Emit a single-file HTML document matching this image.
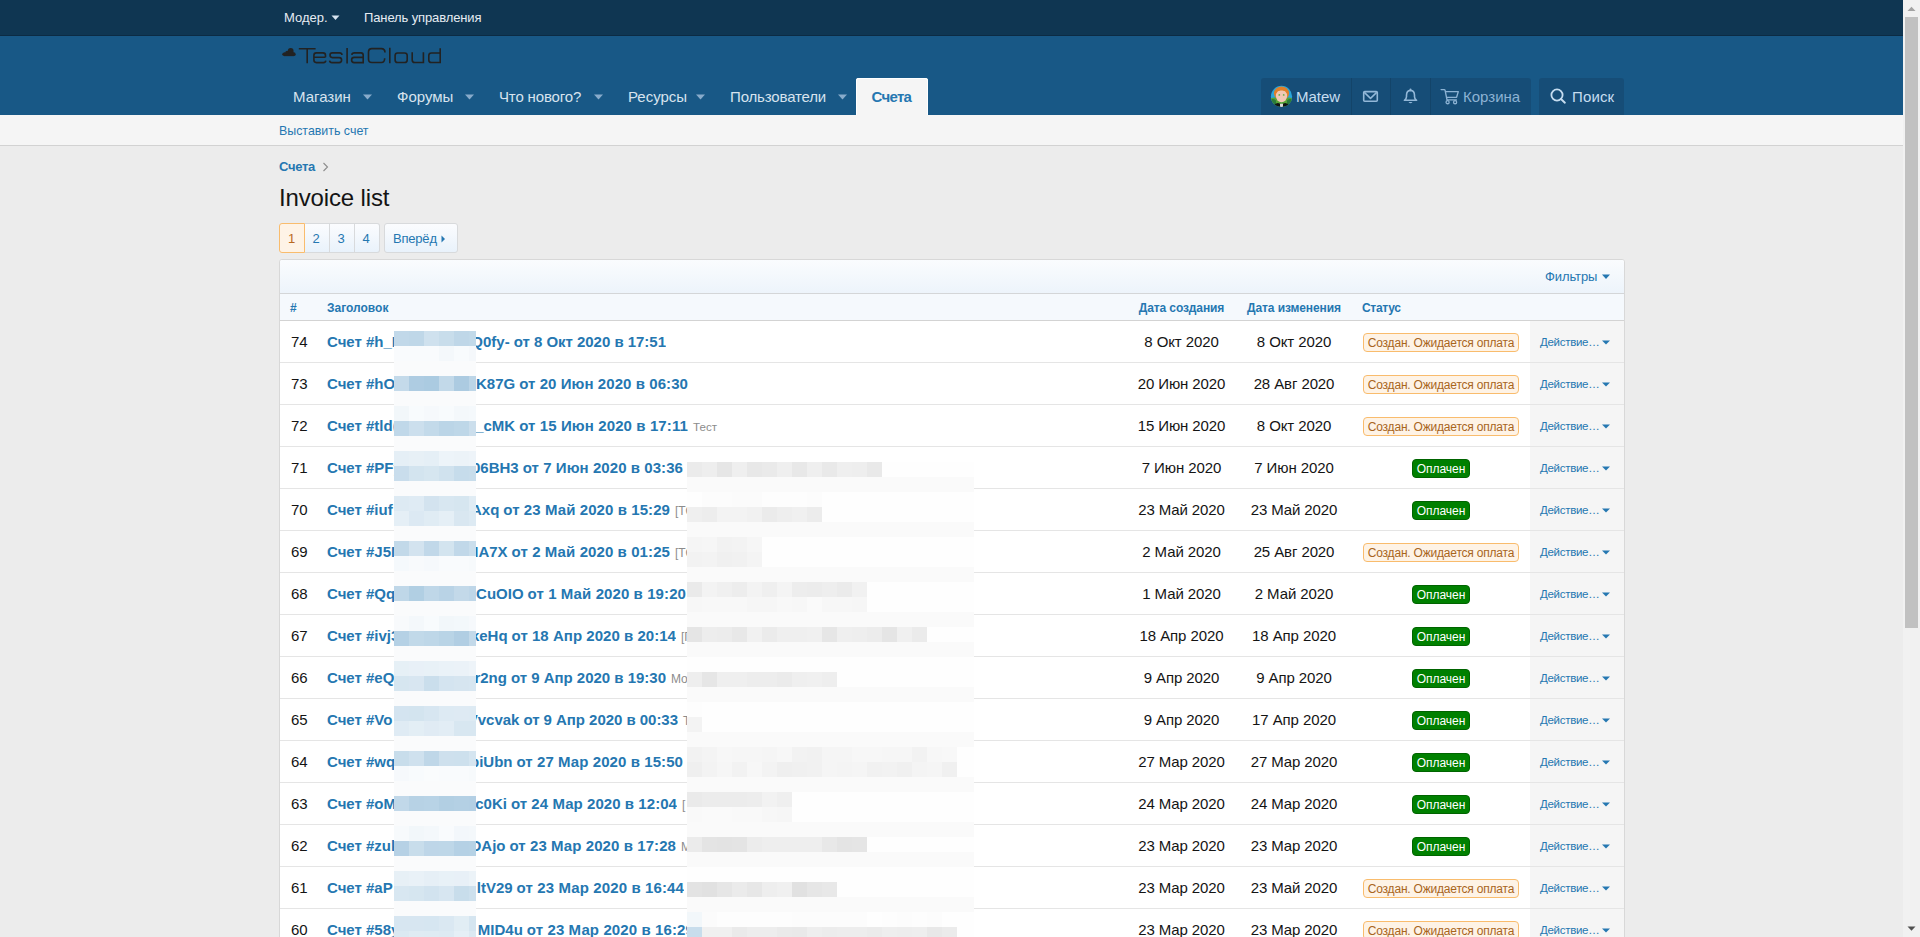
<!DOCTYPE html>
<html><head><meta charset="utf-8"><title>Invoice list</title>
<style>
html,body{margin:0;padding:0;}
body{width:1920px;height:937px;overflow:hidden;background:#ececec;position:relative;font-family:"Liberation Sans", sans-serif;}
.t{position:absolute;white-space:pre;line-height:normal;}
.r{position:absolute;}
</style></head><body>
<div class="r" style="left:0px;top:0px;width:1903px;height:36px;background:#0f3652"></div>
<div class="r" style="left:0px;top:36px;width:1903px;height:79px;background:#185886"></div>
<div class="r" style="left:0px;top:35px;width:1903px;height:1px;background:#0c2b43"></div>
<div class="r" style="left:0px;top:115px;width:1903px;height:30px;background:#f5f5f5"></div>
<div class="r" style="left:0px;top:145px;width:1903px;height:1px;background:#d2d2d2"></div>
<div class="t" style="left:284px;top:10px;font-size:13px;color:#e6ecf2;">Модер.</div>
<svg class="r" style="left:331px;top:15px" width="9" height="6"><path d="M0.5 0.5h8l-4 4.5z" fill="#d6e4f0"/></svg>
<div class="t" style="left:364px;top:10px;font-size:13px;color:#e6ecf2;letter-spacing:-0.12px;">Панель управления</div>
<svg class="r" style="left:0;top:0" width="460" height="80">
<g fill="#222"><circle cx="290.7" cy="51" r="2.9"/><circle cx="287.2" cy="52.6" r="1.9"/><circle cx="284.1" cy="54.3" r="1.8"/><circle cx="293.8" cy="54.2" r="1.85"/><rect x="284" y="52.5" width="10" height="3.65"/></g>
<g fill="none" stroke="#222" stroke-width="1.6">
<path d="M298.8 48.8H315.6M307.2 48.8V63.3"/>
<path d="M325.5 57.2V55.4Q325.5 52.9 323 52.9H316.4Q313.9 52.9 313.9 55.4V60.1Q313.9 62.6 316.4 62.6H323.4Q325.5 62.6 325.8 60.6M313.9 57.3H325.5"/>
<path d="M342 55Q341.8 52.9 339.5 52.9H332.4Q330 52.9 330 55.1Q330 57.6 332.4 57.6H339.2Q341.6 57.6 341.6 60Q341.6 62.6 339.1 62.6H332Q329.8 62.6 329.6 60.6"/>
<path d="M347.1 48V63.4"/>
<path d="M351.8 54.8Q352 52.9 354.4 52.9H361Q363.2 52.9 363.2 55.3V63.4M363.2 57.4H354.2Q351.6 57.4 351.6 60Q351.6 62.6 354.2 62.6H363.2"/>
<path d="M385 52.4Q384.9 48.6 381.3 48.6H371.8Q368.5 48.6 368.5 51.9V59.2Q368.5 62.5 371.8 62.5H381.4Q384.6 62.5 384.7 58.2"/>
<path d="M389.8 47.8V63.3"/>
<path d="M397.6 53H404.6Q407.2 53 407.2 55.6V59.9Q407.2 62.5 404.6 62.5H397.6Q395.1 62.5 395.1 59.9V55.6Q395.1 53 397.6 53Z"/>
<path d="M412.2 52.2V59.9Q412.2 62.5 414.8 62.5H423.4M423.4 52.2V63.3"/>
<path d="M440.2 48.2V63.3M440.2 62.5H431.4Q428.8 62.5 428.8 59.9V55.6Q428.8 53 431.4 53H440.2"/>
</g></svg>
<div class="t" style="left:293px;top:88px;font-size:15px;color:#d7e3ee;">Магазин</div>
<svg class="r" style="left:363px;top:94px" width="9" height="6"><path d="M0 0.5H9L4.5 5.5Z" fill="#88abcb"/></svg>
<div class="t" style="left:397px;top:88px;font-size:15px;color:#d7e3ee;">Форумы</div>
<svg class="r" style="left:465px;top:94px" width="9" height="6"><path d="M0 0.5H9L4.5 5.5Z" fill="#88abcb"/></svg>
<div class="t" style="left:499px;top:88px;font-size:15px;color:#d7e3ee;letter-spacing:-0.15px;">Что нового?</div>
<svg class="r" style="left:594px;top:94px" width="9" height="6"><path d="M0 0.5H9L4.5 5.5Z" fill="#88abcb"/></svg>
<div class="t" style="left:628px;top:88px;font-size:15px;color:#d7e3ee;">Ресурсы</div>
<svg class="r" style="left:696px;top:94px" width="9" height="6"><path d="M0 0.5H9L4.5 5.5Z" fill="#88abcb"/></svg>
<div class="t" style="left:730px;top:88px;font-size:15px;color:#d7e3ee;letter-spacing:-0.15px;">Пользователи</div>
<svg class="r" style="left:838px;top:94px" width="9" height="6"><path d="M0 0.5H9L4.5 5.5Z" fill="#88abcb"/></svg>
<div class="r" style="left:856px;top:78px;width:72px;height:37px;background:#f5f5f5;border-radius:3px 3px 0 0;box-shadow:inset 0 1px 0 #fff, inset 1px 0 0 #fff, inset -1px 0 0 #fff"></div>
<div class="t" style="left:871.5px;top:88px;font-size:15px;font-weight:700;color:#2577b1;letter-spacing:-0.7px;">Счета</div>
<div class="r" style="left:1261px;top:78px;width:270px;height:37px;background:#164d77;border-radius:3px 3px 0 0"></div>
<div class="r" style="left:1351px;top:78px;width:1px;height:37px;background:#134469"></div>
<div class="r" style="left:1390px;top:78px;width:1px;height:37px;background:#134469"></div>
<div class="r" style="left:1430px;top:78px;width:1px;height:37px;background:#134469"></div>
<svg class="r" style="left:1270px;top:85px" width="23" height="23" viewBox="0 0 23 23">
<defs><clipPath id="av"><circle cx="11.5" cy="11.4" r="10.6"/></clipPath></defs>
<g clip-path="url(#av)">
<rect width="23" height="23" fill="#2aa6db"/>
<path d="M0 13.5 Q6 11.5 11.5 14 Q17 11.5 23 13.5 V23 H0Z" fill="#55a336"/>
<path d="M0 15 Q3 13 6 15.5 L6 23 H0Z M17 15.5 Q20 13 23 15 V23 H17Z" fill="#2c7a3a"/>
<ellipse cx="11.5" cy="8.3" rx="7.6" ry="6.8" fill="#e0802a"/>
<ellipse cx="11.5" cy="11" rx="5.6" ry="6.2" fill="#f2c8b4"/>
<path d="M5.6 8.2 Q5.8 3.2 11.5 3.2 Q17.2 3.2 17.4 8.2 Q15.5 5.2 11.5 5.6 Q7.5 5.2 5.6 8.2Z" fill="#e0802a"/>
<circle cx="9.3" cy="9.9" r="0.9" fill="#6bb04a"/><circle cx="13.7" cy="9.9" r="0.9" fill="#6bb04a"/>
<path d="M2.5 23 Q3.5 18.5 8 18 L11.5 19.2 L15 18 Q19.5 18.5 20.5 23Z" fill="#121212"/>
<rect x="10" y="18.8" width="3" height="4.5" fill="#d8d8d8"/>
</g></svg>
<div class="t" style="left:1296px;top:88px;font-size:15px;color:#c6ddf0;">Matew</div>
<svg class="r" style="left:1362px;top:90px" width="17" height="14"><rect x="1.7" y="1.6" width="13.6" height="9.7" rx="1" fill="none" stroke="#93b8d8" stroke-width="1.6"/><path d="M2.3 2.4L8.5 8.4L14.7 2.4" fill="none" stroke="#93b8d8" stroke-width="1.5" stroke-linejoin="round"/></svg>
<svg class="r" style="left:1402px;top:88px" width="17" height="17"><circle cx="8.5" cy="1.5" r="1" fill="#93b8d8"/><path d="M8.5 2.4Q4.6 2.6 4.5 7.2V8.8Q4.5 10.9 2.4 12.3H14.6Q12.5 10.9 12.5 8.8V7.2Q12.4 2.6 8.5 2.4Z" fill="none" stroke="#93b8d8" stroke-width="1.6" stroke-linejoin="round"/><path d="M6.5 14.1H10.5Q8.5 16.6 6.5 14.1Z" fill="#93b8d8"/></svg>
<svg class="r" style="left:1440px;top:88px" width="20" height="18"><path d="M1.1 1.6H4.1Q4.9 1.6 5.1 2.4L7 11.9H16.4M5.6 3.6H18.3L16.6 9.3H6.9" fill="none" stroke="#8db3d4" stroke-width="1.35" stroke-linejoin="round" stroke-linecap="round"/><circle cx="7.6" cy="14.2" r="1.55" fill="none" stroke="#8db3d4" stroke-width="1.3"/><circle cx="15.1" cy="14.2" r="1.55" fill="none" stroke="#8db3d4" stroke-width="1.3"/></svg>
<div class="t" style="left:1463px;top:88px;font-size:15px;color:#8db3d4;">Корзина</div>
<div class="r" style="left:1539px;top:78px;width:85px;height:37px;background:#164d77;border-radius:3px 3px 0 0"></div>
<svg class="r" style="left:1549px;top:87px" width="19" height="19"><circle cx="8" cy="8" r="5.6" fill="none" stroke="#c6ddf0" stroke-width="1.8"/><path d="M12 12L15.9 15.7" stroke="#c6ddf0" stroke-width="1.9" stroke-linecap="round"/></svg>
<div class="t" style="left:1572px;top:88px;font-size:15px;color:#c6ddf0;letter-spacing:0.15px;">Поиск</div>
<div class="t" style="left:279px;top:124px;font-size:12.4px;color:#2577b1;">Выставить счет</div>
<div class="t" style="left:279px;top:159px;font-size:13px;font-weight:700;color:#2577b1;letter-spacing:-0.3px;">Счета</div>
<svg class="r" style="left:322px;top:162px" width="7" height="10"><path d="M1.5 1L5.5 5L1.5 9" fill="none" stroke="#8c8c8c" stroke-width="1.1"/></svg>
<div class="t" style="left:279px;top:184px;font-size:24px;color:#141414;letter-spacing:-0.15px;">Invoice list</div>
<div class="r" style="left:279px;top:223px;width:26px;height:30px;background:#fef3e6;border:1px solid #f9bc6d;box-sizing:border-box;border-radius:3px 0 0 3px"></div>
<div class="r" style="left:305px;top:223px;width:75px;height:30px;background:linear-gradient(to bottom,#fbfcfe,#e9f2fb);border:1px solid #d8dadc;box-sizing:border-box;border-left:none;border-radius:0 3px 3px 0"></div>
<div class="r" style="left:329px;top:223px;width:1px;height:30px;background:#d8dadc"></div>
<div class="r" style="left:354px;top:223px;width:1px;height:30px;background:#d8dadc"></div>
<div class="t" style="left:-208.5px;width:1000px;text-align:center;top:231px;font-size:13px;color:#b8691f;">1</div>
<div class="t" style="left:-184px;width:1000px;text-align:center;top:231px;font-size:13px;color:#2577b1;">2</div>
<div class="t" style="left:-159px;width:1000px;text-align:center;top:231px;font-size:13px;color:#2577b1;">3</div>
<div class="t" style="left:-134px;width:1000px;text-align:center;top:231px;font-size:13px;color:#2577b1;">4</div>
<div class="r" style="left:384px;top:223px;width:74px;height:30px;background:linear-gradient(to bottom,#fbfcfe,#e9f2fb);border:1px solid #d8dadc;box-sizing:border-box;border-radius:3px"></div>
<div class="t" style="left:393px;top:231px;font-size:13px;color:#2577b1;letter-spacing:-0.2px;">Вперёд</div>
<svg class="r" style="left:441px;top:235px" width="5" height="8"><path d="M0.5 0.5L4 4L0.5 7.5Z" fill="#2577b1"/></svg>
<div class="r" style="left:279px;top:259px;width:1346px;height:700px;background:#fff;border:1px solid #d8d8d8;box-sizing:border-box;border-radius:3px"></div>
<div class="r" style="left:280px;top:260px;width:1344px;height:33px;background:linear-gradient(to bottom,#fafcfe,#edf4fb);border-radius:2px 2px 0 0"></div>
<div class="r" style="left:280px;top:293px;width:1344px;height:1px;background:#d4d6d8"></div>
<div class="t" style="left:1545px;top:269px;font-size:13px;color:#2577b1;letter-spacing:-0.1px;">Фильтры</div>
<svg class="r" style="left:1602px;top:274px" width="8" height="5.6"><path d="M0 0.5H8L4.0 5.1Z" fill="#2577b1"/></svg>
<div class="r" style="left:280px;top:294px;width:1344px;height:26px;background:#f5f9fd"></div>
<div class="r" style="left:280px;top:320px;width:1344px;height:1px;background:#d3d3d3"></div>
<div class="t" style="left:290px;top:301px;font-size:12px;font-weight:700;color:#2577b1;">#</div>
<div class="t" style="left:327px;top:301px;font-size:12px;font-weight:700;color:#2577b1;">Заголовок</div>
<div class="t" style="left:681.5px;width:1000px;text-align:center;top:301px;font-size:12px;font-weight:700;color:#2577b1;letter-spacing:-0.1px;">Дата создания</div>
<div class="t" style="left:794px;width:1000px;text-align:center;top:301px;font-size:12px;font-weight:700;color:#2577b1;letter-spacing:-0.1px;">Дата изменения</div>
<div class="t" style="left:1362px;top:301px;font-size:12px;font-weight:700;color:#2577b1;letter-spacing:-0.3px;">Статус</div>
<div class="r" style="left:1530px;top:321px;width:94px;height:41px;background:#f5f5f5"></div>
<div class="r" style="left:280px;top:362px;width:1344px;height:1px;background:#e5e5e5"></div>
<div class="t" style="left:291px;top:333px;font-size:15px;color:#141414;">74</div>
<div class="r" style="left:327px;top:321px;width:67px;height:41px;overflow:hidden"><div class="t" style="left:0;top:12px;font-size:15px;font-weight:700;color:#2577b1">Счет #h_D</div></div>
<div class="r" style="left:476px;top:321px;width:190px;height:41px;overflow:hidden"><div class="t" style="left:-966.3px;width:1000px;text-align:right;top:12px;font-size:15px;font-weight:700;color:#2577b1">Q0fy-</div><div class="t" style="left:37.7px;top:12px;font-size:15px;font-weight:700;color:#2577b1;letter-spacing:-0.024px">от 8 Окт 2020 в 17:51</div></div>
<div class="t" style="left:681.5px;width:1000px;text-align:center;top:333px;font-size:15px;color:#141414;letter-spacing:-0.1px;">8 Окт 2020</div>
<div class="t" style="left:794px;width:1000px;text-align:center;top:333px;font-size:15px;color:#141414;letter-spacing:-0.1px;">8 Окт 2020</div>
<div class="r" style="left:1363px;top:333px;width:156px;height:19px;background:#fef3e6;border:1px solid #f9bc6d;box-sizing:border-box;border-radius:4px"></div>
<div class="t" style="left:941px;width:1000px;text-align:center;top:336px;font-size:12px;color:#a8651c;letter-spacing:-0.2px;">Создан. Ожидается оплата</div>
<div class="t" style="left:1540px;top:336px;font-size:11.5px;color:#2577b1;letter-spacing:-0.3px;">Действие…</div>
<svg class="r" style="left:1602px;top:339.5px" width="8" height="5"><path d="M0 0.5H8L4.0 4.5Z" fill="#2577b1"/></svg>
<div class="r" style="left:1530px;top:363px;width:94px;height:41px;background:#f5f5f5"></div>
<div class="r" style="left:280px;top:404px;width:1344px;height:1px;background:#e5e5e5"></div>
<div class="t" style="left:291px;top:375px;font-size:15px;color:#141414;">73</div>
<div class="r" style="left:327px;top:363px;width:67px;height:41px;overflow:hidden"><div class="t" style="left:0;top:12px;font-size:15px;font-weight:700;color:#2577b1">Счет #hO</div></div>
<div class="r" style="left:476px;top:363px;width:212px;height:41px;overflow:hidden"><div class="t" style="left:-960.8px;width:1000px;text-align:right;top:12px;font-size:15px;font-weight:700;color:#2577b1">K87G</div><div class="t" style="left:43.2px;top:12px;font-size:15px;font-weight:700;color:#2577b1;letter-spacing:0.070px">от 20 Июн 2020 в 06:30</div></div>
<div class="t" style="left:681.5px;width:1000px;text-align:center;top:375px;font-size:15px;color:#141414;letter-spacing:-0.1px;">20 Июн 2020</div>
<div class="t" style="left:794px;width:1000px;text-align:center;top:375px;font-size:15px;color:#141414;letter-spacing:-0.1px;">28 Авг 2020</div>
<div class="r" style="left:1363px;top:375px;width:156px;height:19px;background:#fef3e6;border:1px solid #f9bc6d;box-sizing:border-box;border-radius:4px"></div>
<div class="t" style="left:941px;width:1000px;text-align:center;top:378px;font-size:12px;color:#a8651c;letter-spacing:-0.2px;">Создан. Ожидается оплата</div>
<div class="t" style="left:1540px;top:378px;font-size:11.5px;color:#2577b1;letter-spacing:-0.3px;">Действие…</div>
<svg class="r" style="left:1602px;top:381.5px" width="8" height="5"><path d="M0 0.5H8L4.0 4.5Z" fill="#2577b1"/></svg>
<div class="r" style="left:1530px;top:405px;width:94px;height:41px;background:#f5f5f5"></div>
<div class="r" style="left:280px;top:446px;width:1344px;height:1px;background:#e5e5e5"></div>
<div class="t" style="left:291px;top:417px;font-size:15px;color:#141414;">72</div>
<div class="r" style="left:327px;top:405px;width:67px;height:41px;overflow:hidden"><div class="t" style="left:0;top:12px;font-size:15px;font-weight:700;color:#2577b1">Счет #tld(</div></div>
<div class="r" style="left:476px;top:405px;width:212px;height:41px;overflow:hidden"><div class="t" style="left:-960.8px;width:1000px;text-align:right;top:12px;font-size:15px;font-weight:700;color:#2577b1">_cMK</div><div class="t" style="left:43.2px;top:12px;font-size:15px;font-weight:700;color:#2577b1;letter-spacing:0.107px">от 15 Июн 2020 в 17:11</div></div>
<div class="t" style="left:693px;top:420px;font-size:11.6px;color:#8c8c8c;">Тест</div>
<div class="t" style="left:681.5px;width:1000px;text-align:center;top:417px;font-size:15px;color:#141414;letter-spacing:-0.1px;">15 Июн 2020</div>
<div class="t" style="left:794px;width:1000px;text-align:center;top:417px;font-size:15px;color:#141414;letter-spacing:-0.1px;">8 Окт 2020</div>
<div class="r" style="left:1363px;top:417px;width:156px;height:19px;background:#fef3e6;border:1px solid #f9bc6d;box-sizing:border-box;border-radius:4px"></div>
<div class="t" style="left:941px;width:1000px;text-align:center;top:420px;font-size:12px;color:#a8651c;letter-spacing:-0.2px;">Создан. Ожидается оплата</div>
<div class="t" style="left:1540px;top:420px;font-size:11.5px;color:#2577b1;letter-spacing:-0.3px;">Действие…</div>
<svg class="r" style="left:1602px;top:423.5px" width="8" height="5"><path d="M0 0.5H8L4.0 4.5Z" fill="#2577b1"/></svg>
<div class="r" style="left:1530px;top:447px;width:94px;height:41px;background:#f5f5f5"></div>
<div class="r" style="left:280px;top:488px;width:1344px;height:1px;background:#e5e5e5"></div>
<div class="t" style="left:291px;top:459px;font-size:15px;color:#141414;">71</div>
<div class="r" style="left:327px;top:447px;width:67px;height:41px;overflow:hidden"><div class="t" style="left:0;top:12px;font-size:15px;font-weight:700;color:#2577b1">Счет #PFy</div></div>
<div class="r" style="left:476px;top:447px;width:207px;height:41px;overflow:hidden"><div class="t" style="left:-957.3px;width:1000px;text-align:right;top:12px;font-size:15px;font-weight:700;color:#2577b1">06BH3</div><div class="t" style="left:46.7px;top:12px;font-size:15px;font-weight:700;color:#2577b1;letter-spacing:0.066px">от 7 Июн 2020 в 03:36</div></div>
<div class="t" style="left:681.5px;width:1000px;text-align:center;top:459px;font-size:15px;color:#141414;letter-spacing:-0.1px;">7 Июн 2020</div>
<div class="t" style="left:794px;width:1000px;text-align:center;top:459px;font-size:15px;color:#141414;letter-spacing:-0.1px;">7 Июн 2020</div>
<div class="r" style="left:1412px;top:459px;width:58px;height:19px;background:#008000;border:1px solid #006400;box-sizing:border-box;border-radius:4px"></div>
<div class="t" style="left:941px;width:1000px;text-align:center;top:462px;font-size:12px;color:#ffffff;letter-spacing:-0.05px;">Оплачен</div>
<div class="t" style="left:1540px;top:462px;font-size:11.5px;color:#2577b1;letter-spacing:-0.3px;">Действие…</div>
<svg class="r" style="left:1602px;top:465.5px" width="8" height="5"><path d="M0 0.5H8L4.0 4.5Z" fill="#2577b1"/></svg>
<div class="r" style="left:1530px;top:489px;width:94px;height:41px;background:#f5f5f5"></div>
<div class="r" style="left:280px;top:530px;width:1344px;height:1px;background:#e5e5e5"></div>
<div class="t" style="left:291px;top:501px;font-size:15px;color:#141414;">70</div>
<div class="r" style="left:327px;top:489px;width:67px;height:41px;overflow:hidden"><div class="t" style="left:0;top:12px;font-size:15px;font-weight:700;color:#2577b1">Счет #iuf</div></div>
<div class="r" style="left:476px;top:489px;width:194px;height:41px;overflow:hidden"><div class="t" style="left:-976.7px;width:1000px;text-align:right;top:12px;font-size:15px;font-weight:700;color:#2577b1">Axq</div><div class="t" style="left:27.3px;top:12px;font-size:15px;font-weight:700;color:#2577b1;letter-spacing:0.084px">от 23 Май 2020 в 15:29</div></div>
<div class="r" style="left:670px;top:489px;width:17px;height:41px;overflow:hidden"><div class="t" style="left:5px;top:15px;font-size:12px;color:#8c8c8c">[TO</div></div>
<div class="t" style="left:681.5px;width:1000px;text-align:center;top:501px;font-size:15px;color:#141414;letter-spacing:-0.1px;">23 Май 2020</div>
<div class="t" style="left:794px;width:1000px;text-align:center;top:501px;font-size:15px;color:#141414;letter-spacing:-0.1px;">23 Май 2020</div>
<div class="r" style="left:1412px;top:501px;width:58px;height:19px;background:#008000;border:1px solid #006400;box-sizing:border-box;border-radius:4px"></div>
<div class="t" style="left:941px;width:1000px;text-align:center;top:504px;font-size:12px;color:#ffffff;letter-spacing:-0.05px;">Оплачен</div>
<div class="t" style="left:1540px;top:504px;font-size:11.5px;color:#2577b1;letter-spacing:-0.3px;">Действие…</div>
<svg class="r" style="left:1602px;top:507.5px" width="8" height="5"><path d="M0 0.5H8L4.0 4.5Z" fill="#2577b1"/></svg>
<div class="r" style="left:1530px;top:531px;width:94px;height:41px;background:#f5f5f5"></div>
<div class="r" style="left:280px;top:572px;width:1344px;height:1px;background:#e5e5e5"></div>
<div class="t" style="left:291px;top:543px;font-size:15px;color:#141414;">69</div>
<div class="r" style="left:327px;top:531px;width:67px;height:41px;overflow:hidden"><div class="t" style="left:0;top:12px;font-size:15px;font-weight:700;color:#2577b1">Счет #J5N</div></div>
<div class="r" style="left:476px;top:531px;width:194px;height:41px;overflow:hidden"><div class="t" style="left:-968.4px;width:1000px;text-align:right;top:12px;font-size:15px;font-weight:700;color:#2577b1">IA7X</div><div class="t" style="left:35.6px;top:12px;font-size:15px;font-weight:700;color:#2577b1;letter-spacing:0.090px">от 2 Май 2020 в 01:25</div></div>
<div class="r" style="left:670px;top:531px;width:17px;height:41px;overflow:hidden"><div class="t" style="left:5px;top:15px;font-size:12px;color:#8c8c8c">[TO</div></div>
<div class="t" style="left:681.5px;width:1000px;text-align:center;top:543px;font-size:15px;color:#141414;letter-spacing:-0.1px;">2 Май 2020</div>
<div class="t" style="left:794px;width:1000px;text-align:center;top:543px;font-size:15px;color:#141414;letter-spacing:-0.1px;">25 Авг 2020</div>
<div class="r" style="left:1363px;top:543px;width:156px;height:19px;background:#fef3e6;border:1px solid #f9bc6d;box-sizing:border-box;border-radius:4px"></div>
<div class="t" style="left:941px;width:1000px;text-align:center;top:546px;font-size:12px;color:#a8651c;letter-spacing:-0.2px;">Создан. Ожидается оплата</div>
<div class="t" style="left:1540px;top:546px;font-size:11.5px;color:#2577b1;letter-spacing:-0.3px;">Действие…</div>
<svg class="r" style="left:1602px;top:549.5px" width="8" height="5"><path d="M0 0.5H8L4.0 4.5Z" fill="#2577b1"/></svg>
<div class="r" style="left:1530px;top:573px;width:94px;height:41px;background:#f5f5f5"></div>
<div class="r" style="left:280px;top:614px;width:1344px;height:1px;background:#e5e5e5"></div>
<div class="t" style="left:291px;top:585px;font-size:15px;color:#141414;">68</div>
<div class="r" style="left:327px;top:573px;width:67px;height:41px;overflow:hidden"><div class="t" style="left:0;top:12px;font-size:15px;font-weight:700;color:#2577b1">Счет #Qq</div></div>
<div class="r" style="left:476px;top:573px;width:210px;height:41px;overflow:hidden"><div class="t" style="left:-952.4px;width:1000px;text-align:right;top:12px;font-size:15px;font-weight:700;color:#2577b1">iCuOIO</div><div class="t" style="left:51.6px;top:12px;font-size:15px;font-weight:700;color:#2577b1;letter-spacing:0.090px">от 1 Май 2020 в 19:20</div></div>
<div class="t" style="left:681.5px;width:1000px;text-align:center;top:585px;font-size:15px;color:#141414;letter-spacing:-0.1px;">1 Май 2020</div>
<div class="t" style="left:794px;width:1000px;text-align:center;top:585px;font-size:15px;color:#141414;letter-spacing:-0.1px;">2 Май 2020</div>
<div class="r" style="left:1412px;top:585px;width:58px;height:19px;background:#008000;border:1px solid #006400;box-sizing:border-box;border-radius:4px"></div>
<div class="t" style="left:941px;width:1000px;text-align:center;top:588px;font-size:12px;color:#ffffff;letter-spacing:-0.05px;">Оплачен</div>
<div class="t" style="left:1540px;top:588px;font-size:11.5px;color:#2577b1;letter-spacing:-0.3px;">Действие…</div>
<svg class="r" style="left:1602px;top:591.5px" width="8" height="5"><path d="M0 0.5H8L4.0 4.5Z" fill="#2577b1"/></svg>
<div class="r" style="left:1530px;top:615px;width:94px;height:41px;background:#f5f5f5"></div>
<div class="r" style="left:280px;top:656px;width:1344px;height:1px;background:#e5e5e5"></div>
<div class="t" style="left:291px;top:627px;font-size:15px;color:#141414;">67</div>
<div class="r" style="left:327px;top:615px;width:67px;height:41px;overflow:hidden"><div class="t" style="left:0;top:12px;font-size:15px;font-weight:700;color:#2577b1">Счет #ivj3</div></div>
<div class="r" style="left:476px;top:615px;width:200px;height:41px;overflow:hidden"><div class="t" style="left:-968.4px;width:1000px;text-align:right;top:12px;font-size:15px;font-weight:700;color:#2577b1">keHq</div><div class="t" style="left:35.6px;top:12px;font-size:15px;font-weight:700;color:#2577b1;letter-spacing:0.033px">от 18 Апр 2020 в 20:14</div></div>
<div class="r" style="left:676px;top:615px;width:11px;height:41px;overflow:hidden"><div class="t" style="left:5px;top:15px;font-size:12px;color:#8c8c8c">[П</div></div>
<div class="t" style="left:681.5px;width:1000px;text-align:center;top:627px;font-size:15px;color:#141414;letter-spacing:-0.1px;">18 Апр 2020</div>
<div class="t" style="left:794px;width:1000px;text-align:center;top:627px;font-size:15px;color:#141414;letter-spacing:-0.1px;">18 Апр 2020</div>
<div class="r" style="left:1412px;top:627px;width:58px;height:19px;background:#008000;border:1px solid #006400;box-sizing:border-box;border-radius:4px"></div>
<div class="t" style="left:941px;width:1000px;text-align:center;top:630px;font-size:12px;color:#ffffff;letter-spacing:-0.05px;">Оплачен</div>
<div class="t" style="left:1540px;top:630px;font-size:11.5px;color:#2577b1;letter-spacing:-0.3px;">Действие…</div>
<svg class="r" style="left:1602px;top:633.5px" width="8" height="5"><path d="M0 0.5H8L4.0 4.5Z" fill="#2577b1"/></svg>
<div class="r" style="left:1530px;top:657px;width:94px;height:41px;background:#f5f5f5"></div>
<div class="r" style="left:280px;top:698px;width:1344px;height:1px;background:#e5e5e5"></div>
<div class="t" style="left:291px;top:669px;font-size:15px;color:#141414;">66</div>
<div class="r" style="left:327px;top:657px;width:67px;height:41px;overflow:hidden"><div class="t" style="left:0;top:12px;font-size:15px;font-weight:700;color:#2577b1">Счет #eQ</div></div>
<div class="r" style="left:476px;top:657px;width:190px;height:41px;overflow:hidden"><div class="t" style="left:-969.1px;width:1000px;text-align:right;top:12px;font-size:15px;font-weight:700;color:#2577b1">r2ng</div><div class="t" style="left:34.9px;top:12px;font-size:15px;font-weight:700;color:#2577b1;letter-spacing:-0.011px">от 9 Апр 2020 в 19:30</div></div>
<div class="r" style="left:666px;top:657px;width:21px;height:41px;overflow:hidden"><div class="t" style="left:5px;top:15px;font-size:12px;color:#8c8c8c">Mo</div></div>
<div class="t" style="left:681.5px;width:1000px;text-align:center;top:669px;font-size:15px;color:#141414;letter-spacing:-0.1px;">9 Апр 2020</div>
<div class="t" style="left:794px;width:1000px;text-align:center;top:669px;font-size:15px;color:#141414;letter-spacing:-0.1px;">9 Апр 2020</div>
<div class="r" style="left:1412px;top:669px;width:58px;height:19px;background:#008000;border:1px solid #006400;box-sizing:border-box;border-radius:4px"></div>
<div class="t" style="left:941px;width:1000px;text-align:center;top:672px;font-size:12px;color:#ffffff;letter-spacing:-0.05px;">Оплачен</div>
<div class="t" style="left:1540px;top:672px;font-size:11.5px;color:#2577b1;letter-spacing:-0.3px;">Действие…</div>
<svg class="r" style="left:1602px;top:675.5px" width="8" height="5"><path d="M0 0.5H8L4.0 4.5Z" fill="#2577b1"/></svg>
<div class="r" style="left:1530px;top:699px;width:94px;height:41px;background:#f5f5f5"></div>
<div class="r" style="left:280px;top:740px;width:1344px;height:1px;background:#e5e5e5"></div>
<div class="t" style="left:291px;top:711px;font-size:15px;color:#141414;">65</div>
<div class="r" style="left:327px;top:699px;width:67px;height:41px;overflow:hidden"><div class="t" style="left:0;top:12px;font-size:15px;font-weight:700;color:#2577b1">Счет #Vo</div></div>
<div class="r" style="left:476px;top:699px;width:202px;height:41px;overflow:hidden"><div class="t" style="left:-956.6px;width:1000px;text-align:right;top:12px;font-size:15px;font-weight:700;color:#2577b1">Vvcvak</div><div class="t" style="left:47.4px;top:12px;font-size:15px;font-weight:700;color:#2577b1;letter-spacing:-0.035px">от 9 Апр 2020 в 00:33</div></div>
<div class="r" style="left:678px;top:699px;width:9px;height:41px;overflow:hidden"><div class="t" style="left:5px;top:15px;font-size:12px;color:#8c8c8c">T</div></div>
<div class="t" style="left:681.5px;width:1000px;text-align:center;top:711px;font-size:15px;color:#141414;letter-spacing:-0.1px;">9 Апр 2020</div>
<div class="t" style="left:794px;width:1000px;text-align:center;top:711px;font-size:15px;color:#141414;letter-spacing:-0.1px;">17 Апр 2020</div>
<div class="r" style="left:1412px;top:711px;width:58px;height:19px;background:#008000;border:1px solid #006400;box-sizing:border-box;border-radius:4px"></div>
<div class="t" style="left:941px;width:1000px;text-align:center;top:714px;font-size:12px;color:#ffffff;letter-spacing:-0.05px;">Оплачен</div>
<div class="t" style="left:1540px;top:714px;font-size:11.5px;color:#2577b1;letter-spacing:-0.3px;">Действие…</div>
<svg class="r" style="left:1602px;top:717.5px" width="8" height="5"><path d="M0 0.5H8L4.0 4.5Z" fill="#2577b1"/></svg>
<div class="r" style="left:1530px;top:741px;width:94px;height:41px;background:#f5f5f5"></div>
<div class="r" style="left:280px;top:782px;width:1344px;height:1px;background:#e5e5e5"></div>
<div class="t" style="left:291px;top:753px;font-size:15px;color:#141414;">64</div>
<div class="r" style="left:327px;top:741px;width:67px;height:41px;overflow:hidden"><div class="t" style="left:0;top:12px;font-size:15px;font-weight:700;color:#2577b1">Счет #wq</div></div>
<div class="r" style="left:476px;top:741px;width:207px;height:41px;overflow:hidden"><div class="t" style="left:-963.5px;width:1000px;text-align:right;top:12px;font-size:15px;font-weight:700;color:#2577b1">biUbn</div><div class="t" style="left:40.5px;top:12px;font-size:15px;font-weight:700;color:#2577b1;letter-spacing:0.077px">от 27 Мар 2020 в 15:50</div></div>
<div class="t" style="left:681.5px;width:1000px;text-align:center;top:753px;font-size:15px;color:#141414;letter-spacing:-0.1px;">27 Мар 2020</div>
<div class="t" style="left:794px;width:1000px;text-align:center;top:753px;font-size:15px;color:#141414;letter-spacing:-0.1px;">27 Мар 2020</div>
<div class="r" style="left:1412px;top:753px;width:58px;height:19px;background:#008000;border:1px solid #006400;box-sizing:border-box;border-radius:4px"></div>
<div class="t" style="left:941px;width:1000px;text-align:center;top:756px;font-size:12px;color:#ffffff;letter-spacing:-0.05px;">Оплачен</div>
<div class="t" style="left:1540px;top:756px;font-size:11.5px;color:#2577b1;letter-spacing:-0.3px;">Действие…</div>
<svg class="r" style="left:1602px;top:759.5px" width="8" height="5"><path d="M0 0.5H8L4.0 4.5Z" fill="#2577b1"/></svg>
<div class="r" style="left:1530px;top:783px;width:94px;height:41px;background:#f5f5f5"></div>
<div class="r" style="left:280px;top:824px;width:1344px;height:1px;background:#e5e5e5"></div>
<div class="t" style="left:291px;top:795px;font-size:15px;color:#141414;">63</div>
<div class="r" style="left:327px;top:783px;width:67px;height:41px;overflow:hidden"><div class="t" style="left:0;top:12px;font-size:15px;font-weight:700;color:#2577b1">Счет #oM</div></div>
<div class="r" style="left:476px;top:783px;width:201px;height:41px;overflow:hidden"><div class="t" style="left:-969.1px;width:1000px;text-align:right;top:12px;font-size:15px;font-weight:700;color:#2577b1">c0Ki</div><div class="t" style="left:34.9px;top:12px;font-size:15px;font-weight:700;color:#2577b1;letter-spacing:0.059px">от 24 Мар 2020 в 12:04</div></div>
<div class="r" style="left:677px;top:783px;width:10px;height:41px;overflow:hidden"><div class="t" style="left:5px;top:15px;font-size:12px;color:#8c8c8c">[</div></div>
<div class="t" style="left:681.5px;width:1000px;text-align:center;top:795px;font-size:15px;color:#141414;letter-spacing:-0.1px;">24 Мар 2020</div>
<div class="t" style="left:794px;width:1000px;text-align:center;top:795px;font-size:15px;color:#141414;letter-spacing:-0.1px;">24 Мар 2020</div>
<div class="r" style="left:1412px;top:795px;width:58px;height:19px;background:#008000;border:1px solid #006400;box-sizing:border-box;border-radius:4px"></div>
<div class="t" style="left:941px;width:1000px;text-align:center;top:798px;font-size:12px;color:#ffffff;letter-spacing:-0.05px;">Оплачен</div>
<div class="t" style="left:1540px;top:798px;font-size:11.5px;color:#2577b1;letter-spacing:-0.3px;">Действие…</div>
<svg class="r" style="left:1602px;top:801.5px" width="8" height="5"><path d="M0 0.5H8L4.0 4.5Z" fill="#2577b1"/></svg>
<div class="r" style="left:1530px;top:825px;width:94px;height:41px;background:#f5f5f5"></div>
<div class="r" style="left:280px;top:866px;width:1344px;height:1px;background:#e5e5e5"></div>
<div class="t" style="left:291px;top:837px;font-size:15px;color:#141414;">62</div>
<div class="r" style="left:327px;top:825px;width:67px;height:41px;overflow:hidden"><div class="t" style="left:0;top:12px;font-size:15px;font-weight:700;color:#2577b1">Счет #zuk</div></div>
<div class="r" style="left:476px;top:825px;width:200px;height:41px;overflow:hidden"><div class="t" style="left:-970.5px;width:1000px;text-align:right;top:12px;font-size:15px;font-weight:700;color:#2577b1">DAjo</div><div class="t" style="left:33.5px;top:12px;font-size:15px;font-weight:700;color:#2577b1;letter-spacing:0.077px">от 23 Мар 2020 в 17:28</div></div>
<div class="r" style="left:676px;top:825px;width:11px;height:41px;overflow:hidden"><div class="t" style="left:5px;top:15px;font-size:12px;color:#8c8c8c">M</div></div>
<div class="t" style="left:681.5px;width:1000px;text-align:center;top:837px;font-size:15px;color:#141414;letter-spacing:-0.1px;">23 Мар 2020</div>
<div class="t" style="left:794px;width:1000px;text-align:center;top:837px;font-size:15px;color:#141414;letter-spacing:-0.1px;">23 Мар 2020</div>
<div class="r" style="left:1412px;top:837px;width:58px;height:19px;background:#008000;border:1px solid #006400;box-sizing:border-box;border-radius:4px"></div>
<div class="t" style="left:941px;width:1000px;text-align:center;top:840px;font-size:12px;color:#ffffff;letter-spacing:-0.05px;">Оплачен</div>
<div class="t" style="left:1540px;top:840px;font-size:11.5px;color:#2577b1;letter-spacing:-0.3px;">Действие…</div>
<svg class="r" style="left:1602px;top:843.5px" width="8" height="5"><path d="M0 0.5H8L4.0 4.5Z" fill="#2577b1"/></svg>
<div class="r" style="left:1530px;top:867px;width:94px;height:41px;background:#f5f5f5"></div>
<div class="r" style="left:280px;top:908px;width:1344px;height:1px;background:#e5e5e5"></div>
<div class="t" style="left:291px;top:879px;font-size:15px;color:#141414;">61</div>
<div class="r" style="left:327px;top:867px;width:67px;height:41px;overflow:hidden"><div class="t" style="left:0;top:12px;font-size:15px;font-weight:700;color:#2577b1">Счет #aP</div></div>
<div class="r" style="left:476px;top:867px;width:208px;height:41px;overflow:hidden"><div class="t" style="left:-963.4px;width:1000px;text-align:right;top:12px;font-size:15px;font-weight:700;color:#2577b1">ltV29</div><div class="t" style="left:40.6px;top:12px;font-size:15px;font-weight:700;color:#2577b1;letter-spacing:0.118px">от 23 Мар 2020 в 16:44</div></div>
<div class="t" style="left:681.5px;width:1000px;text-align:center;top:879px;font-size:15px;color:#141414;letter-spacing:-0.1px;">23 Мар 2020</div>
<div class="t" style="left:794px;width:1000px;text-align:center;top:879px;font-size:15px;color:#141414;letter-spacing:-0.1px;">23 Май 2020</div>
<div class="r" style="left:1363px;top:879px;width:156px;height:19px;background:#fef3e6;border:1px solid #f9bc6d;box-sizing:border-box;border-radius:4px"></div>
<div class="t" style="left:941px;width:1000px;text-align:center;top:882px;font-size:12px;color:#a8651c;letter-spacing:-0.2px;">Создан. Ожидается оплата</div>
<div class="t" style="left:1540px;top:882px;font-size:11.5px;color:#2577b1;letter-spacing:-0.3px;">Действие…</div>
<svg class="r" style="left:1602px;top:885.5px" width="8" height="5"><path d="M0 0.5H8L4.0 4.5Z" fill="#2577b1"/></svg>
<div class="r" style="left:1530px;top:909px;width:94px;height:41px;background:#f5f5f5"></div>
<div class="r" style="left:280px;top:950px;width:1344px;height:1px;background:#e5e5e5"></div>
<div class="t" style="left:291px;top:921px;font-size:15px;color:#141414;">60</div>
<div class="r" style="left:327px;top:909px;width:67px;height:41px;overflow:hidden"><div class="t" style="left:0;top:12px;font-size:15px;font-weight:700;color:#2577b1">Счет #58y</div></div>
<div class="r" style="left:476px;top:909px;width:211px;height:41px;overflow:hidden"><div class="t" style="left:-953.2px;width:1000px;text-align:right;top:12px;font-size:15px;font-weight:700;color:#2577b1">MID4u</div><div class="t" style="left:50.8px;top:12px;font-size:15px;font-weight:700;color:#2577b1;letter-spacing:0.109px">от 23 Мар 2020 в 16:29</div></div>
<div class="t" style="left:681.5px;width:1000px;text-align:center;top:921px;font-size:15px;color:#141414;letter-spacing:-0.1px;">23 Мар 2020</div>
<div class="t" style="left:794px;width:1000px;text-align:center;top:921px;font-size:15px;color:#141414;letter-spacing:-0.1px;">23 Мар 2020</div>
<div class="r" style="left:1363px;top:921px;width:156px;height:19px;background:#fef3e6;border:1px solid #f9bc6d;box-sizing:border-box;border-radius:4px"></div>
<div class="t" style="left:941px;width:1000px;text-align:center;top:924px;font-size:12px;color:#a8651c;letter-spacing:-0.2px;">Создан. Ожидается оплата</div>
<div class="t" style="left:1540px;top:924px;font-size:11.5px;color:#2577b1;letter-spacing:-0.3px;">Действие…</div>
<svg class="r" style="left:1602px;top:927.5px" width="8" height="5"><path d="M0 0.5H8L4.0 4.5Z" fill="#2577b1"/></svg>
<div class="r" style="left:687px;top:462px;width:15px;height:15px;background:#ebebeb"></div>
<div class="r" style="left:702px;top:462px;width:15px;height:15px;background:#eeeeee"></div>
<div class="r" style="left:717px;top:462px;width:15px;height:15px;background:#e6e6e6"></div>
<div class="r" style="left:732px;top:462px;width:15px;height:15px;background:#efefef"></div>
<div class="r" style="left:747px;top:462px;width:15px;height:15px;background:#e8e8e8"></div>
<div class="r" style="left:762px;top:462px;width:15px;height:15px;background:#eaeaea"></div>
<div class="r" style="left:777px;top:462px;width:15px;height:15px;background:#efefef"></div>
<div class="r" style="left:792px;top:462px;width:15px;height:15px;background:#e8e8e8"></div>
<div class="r" style="left:807px;top:462px;width:15px;height:15px;background:#efefef"></div>
<div class="r" style="left:822px;top:462px;width:15px;height:15px;background:#e9e9e9"></div>
<div class="r" style="left:837px;top:462px;width:15px;height:15px;background:#efefef"></div>
<div class="r" style="left:852px;top:462px;width:15px;height:15px;background:#eeeeee"></div>
<div class="r" style="left:867px;top:462px;width:15px;height:15px;background:#e9e9e9"></div>
<div class="r" style="left:882px;top:462px;width:15px;height:15px;background:#fefefe"></div>
<div class="r" style="left:897px;top:462px;width:15px;height:15px;background:#fefefe"></div>
<div class="r" style="left:912px;top:462px;width:15px;height:15px;background:#fefefe"></div>
<div class="r" style="left:927px;top:462px;width:15px;height:15px;background:#fefefe"></div>
<div class="r" style="left:942px;top:462px;width:15px;height:15px;background:#fefefe"></div>
<div class="r" style="left:957px;top:462px;width:15px;height:15px;background:#fefefe"></div>
<div class="r" style="left:972px;top:462px;width:2px;height:15px;background:#fefefe"></div>
<div class="r" style="left:687px;top:477px;width:15px;height:15px;background:#fafafa"></div>
<div class="r" style="left:702px;top:477px;width:15px;height:15px;background:#fafafa"></div>
<div class="r" style="left:717px;top:477px;width:15px;height:15px;background:#fafafa"></div>
<div class="r" style="left:732px;top:477px;width:15px;height:15px;background:#fafafa"></div>
<div class="r" style="left:747px;top:477px;width:15px;height:15px;background:#fafafa"></div>
<div class="r" style="left:762px;top:477px;width:15px;height:15px;background:#fafafa"></div>
<div class="r" style="left:777px;top:477px;width:15px;height:15px;background:#fafafa"></div>
<div class="r" style="left:792px;top:477px;width:15px;height:15px;background:#fafafa"></div>
<div class="r" style="left:807px;top:477px;width:15px;height:15px;background:#fafafa"></div>
<div class="r" style="left:822px;top:477px;width:15px;height:15px;background:#fafafa"></div>
<div class="r" style="left:837px;top:477px;width:15px;height:15px;background:#fafafa"></div>
<div class="r" style="left:852px;top:477px;width:15px;height:15px;background:#fafafa"></div>
<div class="r" style="left:867px;top:477px;width:15px;height:15px;background:#fafafa"></div>
<div class="r" style="left:882px;top:477px;width:15px;height:15px;background:#fafafa"></div>
<div class="r" style="left:897px;top:477px;width:15px;height:15px;background:#fafafa"></div>
<div class="r" style="left:912px;top:477px;width:15px;height:15px;background:#fafafa"></div>
<div class="r" style="left:927px;top:477px;width:15px;height:15px;background:#fafafa"></div>
<div class="r" style="left:942px;top:477px;width:15px;height:15px;background:#fafafa"></div>
<div class="r" style="left:957px;top:477px;width:15px;height:15px;background:#fafafa"></div>
<div class="r" style="left:972px;top:477px;width:2px;height:15px;background:#fafafa"></div>
<div class="r" style="left:687px;top:492px;width:15px;height:15px;background:#fefefe"></div>
<div class="r" style="left:702px;top:492px;width:15px;height:15px;background:#fcfcfc"></div>
<div class="r" style="left:717px;top:492px;width:15px;height:15px;background:#fcfcfc"></div>
<div class="r" style="left:732px;top:492px;width:15px;height:15px;background:#fbfbfb"></div>
<div class="r" style="left:747px;top:492px;width:15px;height:15px;background:#fbfbfb"></div>
<div class="r" style="left:762px;top:492px;width:15px;height:15px;background:#fdfdfd"></div>
<div class="r" style="left:777px;top:492px;width:15px;height:15px;background:#fdfdfd"></div>
<div class="r" style="left:792px;top:492px;width:15px;height:15px;background:#fdfdfd"></div>
<div class="r" style="left:807px;top:492px;width:15px;height:15px;background:#fcfcfc"></div>
<div class="r" style="left:822px;top:492px;width:15px;height:15px;background:#fefefe"></div>
<div class="r" style="left:837px;top:492px;width:15px;height:15px;background:#fefefe"></div>
<div class="r" style="left:852px;top:492px;width:15px;height:15px;background:#fefefe"></div>
<div class="r" style="left:867px;top:492px;width:15px;height:15px;background:#fefefe"></div>
<div class="r" style="left:882px;top:492px;width:15px;height:15px;background:#fefefe"></div>
<div class="r" style="left:897px;top:492px;width:15px;height:15px;background:#fefefe"></div>
<div class="r" style="left:912px;top:492px;width:15px;height:15px;background:#fefefe"></div>
<div class="r" style="left:927px;top:492px;width:15px;height:15px;background:#fefefe"></div>
<div class="r" style="left:942px;top:492px;width:15px;height:15px;background:#fefefe"></div>
<div class="r" style="left:957px;top:492px;width:15px;height:15px;background:#fefefe"></div>
<div class="r" style="left:972px;top:492px;width:2px;height:15px;background:#fefefe"></div>
<div class="r" style="left:687px;top:507px;width:15px;height:15px;background:#efefef"></div>
<div class="r" style="left:702px;top:507px;width:15px;height:15px;background:#ededed"></div>
<div class="r" style="left:717px;top:507px;width:15px;height:15px;background:#f3f3f3"></div>
<div class="r" style="left:732px;top:507px;width:15px;height:15px;background:#f3f3f3"></div>
<div class="r" style="left:747px;top:507px;width:15px;height:15px;background:#f1f1f1"></div>
<div class="r" style="left:762px;top:507px;width:15px;height:15px;background:#ebebeb"></div>
<div class="r" style="left:777px;top:507px;width:15px;height:15px;background:#eeeeee"></div>
<div class="r" style="left:792px;top:507px;width:15px;height:15px;background:#f0f0f0"></div>
<div class="r" style="left:807px;top:507px;width:15px;height:15px;background:#ececec"></div>
<div class="r" style="left:822px;top:507px;width:15px;height:15px;background:#fefefe"></div>
<div class="r" style="left:837px;top:507px;width:15px;height:15px;background:#fefefe"></div>
<div class="r" style="left:852px;top:507px;width:15px;height:15px;background:#fefefe"></div>
<div class="r" style="left:867px;top:507px;width:15px;height:15px;background:#fefefe"></div>
<div class="r" style="left:882px;top:507px;width:15px;height:15px;background:#fefefe"></div>
<div class="r" style="left:897px;top:507px;width:15px;height:15px;background:#fefefe"></div>
<div class="r" style="left:912px;top:507px;width:15px;height:15px;background:#fefefe"></div>
<div class="r" style="left:927px;top:507px;width:15px;height:15px;background:#fefefe"></div>
<div class="r" style="left:942px;top:507px;width:15px;height:15px;background:#fefefe"></div>
<div class="r" style="left:957px;top:507px;width:15px;height:15px;background:#fefefe"></div>
<div class="r" style="left:972px;top:507px;width:2px;height:15px;background:#fefefe"></div>
<div class="r" style="left:687px;top:522px;width:15px;height:15px;background:#fafafa"></div>
<div class="r" style="left:702px;top:522px;width:15px;height:15px;background:#fafafa"></div>
<div class="r" style="left:717px;top:522px;width:15px;height:15px;background:#fafafa"></div>
<div class="r" style="left:732px;top:522px;width:15px;height:15px;background:#fafafa"></div>
<div class="r" style="left:747px;top:522px;width:15px;height:15px;background:#fafafa"></div>
<div class="r" style="left:762px;top:522px;width:15px;height:15px;background:#fafafa"></div>
<div class="r" style="left:777px;top:522px;width:15px;height:15px;background:#fafafa"></div>
<div class="r" style="left:792px;top:522px;width:15px;height:15px;background:#fafafa"></div>
<div class="r" style="left:807px;top:522px;width:15px;height:15px;background:#fafafa"></div>
<div class="r" style="left:822px;top:522px;width:15px;height:15px;background:#fafafa"></div>
<div class="r" style="left:837px;top:522px;width:15px;height:15px;background:#fafafa"></div>
<div class="r" style="left:852px;top:522px;width:15px;height:15px;background:#fafafa"></div>
<div class="r" style="left:867px;top:522px;width:15px;height:15px;background:#fafafa"></div>
<div class="r" style="left:882px;top:522px;width:15px;height:15px;background:#fafafa"></div>
<div class="r" style="left:897px;top:522px;width:15px;height:15px;background:#fafafa"></div>
<div class="r" style="left:912px;top:522px;width:15px;height:15px;background:#fafafa"></div>
<div class="r" style="left:927px;top:522px;width:15px;height:15px;background:#fafafa"></div>
<div class="r" style="left:942px;top:522px;width:15px;height:15px;background:#fafafa"></div>
<div class="r" style="left:957px;top:522px;width:15px;height:15px;background:#fafafa"></div>
<div class="r" style="left:972px;top:522px;width:2px;height:15px;background:#fafafa"></div>
<div class="r" style="left:687px;top:537px;width:15px;height:15px;background:#f5f5f5"></div>
<div class="r" style="left:702px;top:537px;width:15px;height:15px;background:#f6f6f6"></div>
<div class="r" style="left:717px;top:537px;width:15px;height:15px;background:#f2f2f2"></div>
<div class="r" style="left:732px;top:537px;width:15px;height:15px;background:#f3f3f3"></div>
<div class="r" style="left:747px;top:537px;width:15px;height:15px;background:#f6f6f6"></div>
<div class="r" style="left:762px;top:537px;width:15px;height:15px;background:#fefefe"></div>
<div class="r" style="left:777px;top:537px;width:15px;height:15px;background:#fefefe"></div>
<div class="r" style="left:792px;top:537px;width:15px;height:15px;background:#fefefe"></div>
<div class="r" style="left:807px;top:537px;width:15px;height:15px;background:#fefefe"></div>
<div class="r" style="left:822px;top:537px;width:15px;height:15px;background:#fefefe"></div>
<div class="r" style="left:837px;top:537px;width:15px;height:15px;background:#fefefe"></div>
<div class="r" style="left:852px;top:537px;width:15px;height:15px;background:#fefefe"></div>
<div class="r" style="left:867px;top:537px;width:15px;height:15px;background:#fefefe"></div>
<div class="r" style="left:882px;top:537px;width:15px;height:15px;background:#fefefe"></div>
<div class="r" style="left:897px;top:537px;width:15px;height:15px;background:#fefefe"></div>
<div class="r" style="left:912px;top:537px;width:15px;height:15px;background:#fefefe"></div>
<div class="r" style="left:927px;top:537px;width:15px;height:15px;background:#fefefe"></div>
<div class="r" style="left:942px;top:537px;width:15px;height:15px;background:#fefefe"></div>
<div class="r" style="left:957px;top:537px;width:15px;height:15px;background:#fefefe"></div>
<div class="r" style="left:972px;top:537px;width:2px;height:15px;background:#fefefe"></div>
<div class="r" style="left:687px;top:552px;width:15px;height:15px;background:#f2f2f2"></div>
<div class="r" style="left:702px;top:552px;width:15px;height:15px;background:#f3f3f3"></div>
<div class="r" style="left:717px;top:552px;width:15px;height:15px;background:#f0f0f0"></div>
<div class="r" style="left:732px;top:552px;width:15px;height:15px;background:#f1f1f1"></div>
<div class="r" style="left:747px;top:552px;width:15px;height:15px;background:#f4f4f4"></div>
<div class="r" style="left:762px;top:552px;width:15px;height:15px;background:#fefefe"></div>
<div class="r" style="left:777px;top:552px;width:15px;height:15px;background:#fefefe"></div>
<div class="r" style="left:792px;top:552px;width:15px;height:15px;background:#fefefe"></div>
<div class="r" style="left:807px;top:552px;width:15px;height:15px;background:#fefefe"></div>
<div class="r" style="left:822px;top:552px;width:15px;height:15px;background:#fefefe"></div>
<div class="r" style="left:837px;top:552px;width:15px;height:15px;background:#fefefe"></div>
<div class="r" style="left:852px;top:552px;width:15px;height:15px;background:#fefefe"></div>
<div class="r" style="left:867px;top:552px;width:15px;height:15px;background:#fefefe"></div>
<div class="r" style="left:882px;top:552px;width:15px;height:15px;background:#fefefe"></div>
<div class="r" style="left:897px;top:552px;width:15px;height:15px;background:#fefefe"></div>
<div class="r" style="left:912px;top:552px;width:15px;height:15px;background:#fefefe"></div>
<div class="r" style="left:927px;top:552px;width:15px;height:15px;background:#fefefe"></div>
<div class="r" style="left:942px;top:552px;width:15px;height:15px;background:#fefefe"></div>
<div class="r" style="left:957px;top:552px;width:15px;height:15px;background:#fefefe"></div>
<div class="r" style="left:972px;top:552px;width:2px;height:15px;background:#fefefe"></div>
<div class="r" style="left:687px;top:567px;width:15px;height:15px;background:#fafafa"></div>
<div class="r" style="left:702px;top:567px;width:15px;height:15px;background:#fafafa"></div>
<div class="r" style="left:717px;top:567px;width:15px;height:15px;background:#fafafa"></div>
<div class="r" style="left:732px;top:567px;width:15px;height:15px;background:#fafafa"></div>
<div class="r" style="left:747px;top:567px;width:15px;height:15px;background:#fafafa"></div>
<div class="r" style="left:762px;top:567px;width:15px;height:15px;background:#fafafa"></div>
<div class="r" style="left:777px;top:567px;width:15px;height:15px;background:#fafafa"></div>
<div class="r" style="left:792px;top:567px;width:15px;height:15px;background:#fafafa"></div>
<div class="r" style="left:807px;top:567px;width:15px;height:15px;background:#fafafa"></div>
<div class="r" style="left:822px;top:567px;width:15px;height:15px;background:#fafafa"></div>
<div class="r" style="left:837px;top:567px;width:15px;height:15px;background:#fafafa"></div>
<div class="r" style="left:852px;top:567px;width:15px;height:15px;background:#fafafa"></div>
<div class="r" style="left:867px;top:567px;width:15px;height:15px;background:#fafafa"></div>
<div class="r" style="left:882px;top:567px;width:15px;height:15px;background:#fafafa"></div>
<div class="r" style="left:897px;top:567px;width:15px;height:15px;background:#fafafa"></div>
<div class="r" style="left:912px;top:567px;width:15px;height:15px;background:#fafafa"></div>
<div class="r" style="left:927px;top:567px;width:15px;height:15px;background:#fafafa"></div>
<div class="r" style="left:942px;top:567px;width:15px;height:15px;background:#fafafa"></div>
<div class="r" style="left:957px;top:567px;width:15px;height:15px;background:#fafafa"></div>
<div class="r" style="left:972px;top:567px;width:2px;height:15px;background:#fafafa"></div>
<div class="r" style="left:687px;top:582px;width:15px;height:15px;background:#eaeaea"></div>
<div class="r" style="left:702px;top:582px;width:15px;height:15px;background:#f3f3f3"></div>
<div class="r" style="left:717px;top:582px;width:15px;height:15px;background:#f0f0f0"></div>
<div class="r" style="left:732px;top:582px;width:15px;height:15px;background:#ededed"></div>
<div class="r" style="left:747px;top:582px;width:15px;height:15px;background:#f3f3f3"></div>
<div class="r" style="left:762px;top:582px;width:15px;height:15px;background:#efefef"></div>
<div class="r" style="left:777px;top:582px;width:15px;height:15px;background:#f4f4f4"></div>
<div class="r" style="left:792px;top:582px;width:15px;height:15px;background:#ededed"></div>
<div class="r" style="left:807px;top:582px;width:15px;height:15px;background:#ececec"></div>
<div class="r" style="left:822px;top:582px;width:15px;height:15px;background:#eeeeee"></div>
<div class="r" style="left:837px;top:582px;width:15px;height:15px;background:#ebebeb"></div>
<div class="r" style="left:852px;top:582px;width:15px;height:15px;background:#f1f1f1"></div>
<div class="r" style="left:867px;top:582px;width:15px;height:15px;background:#fefefe"></div>
<div class="r" style="left:882px;top:582px;width:15px;height:15px;background:#fefefe"></div>
<div class="r" style="left:897px;top:582px;width:15px;height:15px;background:#fefefe"></div>
<div class="r" style="left:912px;top:582px;width:15px;height:15px;background:#fefefe"></div>
<div class="r" style="left:927px;top:582px;width:15px;height:15px;background:#fefefe"></div>
<div class="r" style="left:942px;top:582px;width:15px;height:15px;background:#fefefe"></div>
<div class="r" style="left:957px;top:582px;width:15px;height:15px;background:#fefefe"></div>
<div class="r" style="left:972px;top:582px;width:2px;height:15px;background:#fefefe"></div>
<div class="r" style="left:687px;top:597px;width:15px;height:15px;background:#f7f7f7"></div>
<div class="r" style="left:702px;top:597px;width:15px;height:15px;background:#f8f8f8"></div>
<div class="r" style="left:717px;top:597px;width:15px;height:15px;background:#f8f8f8"></div>
<div class="r" style="left:732px;top:597px;width:15px;height:15px;background:#f8f8f8"></div>
<div class="r" style="left:747px;top:597px;width:15px;height:15px;background:#f6f6f6"></div>
<div class="r" style="left:762px;top:597px;width:15px;height:15px;background:#f6f6f6"></div>
<div class="r" style="left:777px;top:597px;width:15px;height:15px;background:#f8f8f8"></div>
<div class="r" style="left:792px;top:597px;width:15px;height:15px;background:#f7f7f7"></div>
<div class="r" style="left:807px;top:597px;width:15px;height:15px;background:#fafafa"></div>
<div class="r" style="left:822px;top:597px;width:15px;height:15px;background:#f7f7f7"></div>
<div class="r" style="left:837px;top:597px;width:15px;height:15px;background:#f7f7f7"></div>
<div class="r" style="left:852px;top:597px;width:15px;height:15px;background:#f6f6f6"></div>
<div class="r" style="left:867px;top:597px;width:15px;height:15px;background:#fefefe"></div>
<div class="r" style="left:882px;top:597px;width:15px;height:15px;background:#fefefe"></div>
<div class="r" style="left:897px;top:597px;width:15px;height:15px;background:#fefefe"></div>
<div class="r" style="left:912px;top:597px;width:15px;height:15px;background:#fefefe"></div>
<div class="r" style="left:927px;top:597px;width:15px;height:15px;background:#fefefe"></div>
<div class="r" style="left:942px;top:597px;width:15px;height:15px;background:#fefefe"></div>
<div class="r" style="left:957px;top:597px;width:15px;height:15px;background:#fefefe"></div>
<div class="r" style="left:972px;top:597px;width:2px;height:15px;background:#fefefe"></div>
<div class="r" style="left:687px;top:612px;width:15px;height:15px;background:#fafafa"></div>
<div class="r" style="left:702px;top:612px;width:15px;height:15px;background:#fafafa"></div>
<div class="r" style="left:717px;top:612px;width:15px;height:15px;background:#fafafa"></div>
<div class="r" style="left:732px;top:612px;width:15px;height:15px;background:#fafafa"></div>
<div class="r" style="left:747px;top:612px;width:15px;height:15px;background:#fafafa"></div>
<div class="r" style="left:762px;top:612px;width:15px;height:15px;background:#fafafa"></div>
<div class="r" style="left:777px;top:612px;width:15px;height:15px;background:#fafafa"></div>
<div class="r" style="left:792px;top:612px;width:15px;height:15px;background:#fafafa"></div>
<div class="r" style="left:807px;top:612px;width:15px;height:15px;background:#fafafa"></div>
<div class="r" style="left:822px;top:612px;width:15px;height:15px;background:#fafafa"></div>
<div class="r" style="left:837px;top:612px;width:15px;height:15px;background:#fafafa"></div>
<div class="r" style="left:852px;top:612px;width:15px;height:15px;background:#fafafa"></div>
<div class="r" style="left:867px;top:612px;width:15px;height:15px;background:#fafafa"></div>
<div class="r" style="left:882px;top:612px;width:15px;height:15px;background:#fafafa"></div>
<div class="r" style="left:897px;top:612px;width:15px;height:15px;background:#fafafa"></div>
<div class="r" style="left:912px;top:612px;width:15px;height:15px;background:#fafafa"></div>
<div class="r" style="left:927px;top:612px;width:15px;height:15px;background:#fafafa"></div>
<div class="r" style="left:942px;top:612px;width:15px;height:15px;background:#fafafa"></div>
<div class="r" style="left:957px;top:612px;width:15px;height:15px;background:#fafafa"></div>
<div class="r" style="left:972px;top:612px;width:2px;height:15px;background:#fafafa"></div>
<div class="r" style="left:687px;top:627px;width:15px;height:15px;background:#e5e5e5"></div>
<div class="r" style="left:702px;top:627px;width:15px;height:15px;background:#ededed"></div>
<div class="r" style="left:717px;top:627px;width:15px;height:15px;background:#ececec"></div>
<div class="r" style="left:732px;top:627px;width:15px;height:15px;background:#e8e8e8"></div>
<div class="r" style="left:747px;top:627px;width:15px;height:15px;background:#f1f1f1"></div>
<div class="r" style="left:762px;top:627px;width:15px;height:15px;background:#ebebeb"></div>
<div class="r" style="left:777px;top:627px;width:15px;height:15px;background:#efefef"></div>
<div class="r" style="left:792px;top:627px;width:15px;height:15px;background:#efefef"></div>
<div class="r" style="left:807px;top:627px;width:15px;height:15px;background:#f0f0f0"></div>
<div class="r" style="left:822px;top:627px;width:15px;height:15px;background:#e6e6e6"></div>
<div class="r" style="left:837px;top:627px;width:15px;height:15px;background:#efefef"></div>
<div class="r" style="left:852px;top:627px;width:15px;height:15px;background:#eeeeee"></div>
<div class="r" style="left:867px;top:627px;width:15px;height:15px;background:#ececec"></div>
<div class="r" style="left:882px;top:627px;width:15px;height:15px;background:#e5e5e5"></div>
<div class="r" style="left:897px;top:627px;width:15px;height:15px;background:#f0f0f0"></div>
<div class="r" style="left:912px;top:627px;width:15px;height:15px;background:#ebebeb"></div>
<div class="r" style="left:927px;top:627px;width:15px;height:15px;background:#fefefe"></div>
<div class="r" style="left:942px;top:627px;width:15px;height:15px;background:#fefefe"></div>
<div class="r" style="left:957px;top:627px;width:15px;height:15px;background:#fefefe"></div>
<div class="r" style="left:972px;top:627px;width:2px;height:15px;background:#fefefe"></div>
<div class="r" style="left:687px;top:642px;width:15px;height:15px;background:#fafafa"></div>
<div class="r" style="left:702px;top:642px;width:15px;height:15px;background:#fafafa"></div>
<div class="r" style="left:717px;top:642px;width:15px;height:15px;background:#fafafa"></div>
<div class="r" style="left:732px;top:642px;width:15px;height:15px;background:#fafafa"></div>
<div class="r" style="left:747px;top:642px;width:15px;height:15px;background:#fafafa"></div>
<div class="r" style="left:762px;top:642px;width:15px;height:15px;background:#fafafa"></div>
<div class="r" style="left:777px;top:642px;width:15px;height:15px;background:#fafafa"></div>
<div class="r" style="left:792px;top:642px;width:15px;height:15px;background:#fafafa"></div>
<div class="r" style="left:807px;top:642px;width:15px;height:15px;background:#fafafa"></div>
<div class="r" style="left:822px;top:642px;width:15px;height:15px;background:#fafafa"></div>
<div class="r" style="left:837px;top:642px;width:15px;height:15px;background:#fafafa"></div>
<div class="r" style="left:852px;top:642px;width:15px;height:15px;background:#fafafa"></div>
<div class="r" style="left:867px;top:642px;width:15px;height:15px;background:#fafafa"></div>
<div class="r" style="left:882px;top:642px;width:15px;height:15px;background:#fafafa"></div>
<div class="r" style="left:897px;top:642px;width:15px;height:15px;background:#fafafa"></div>
<div class="r" style="left:912px;top:642px;width:15px;height:15px;background:#fafafa"></div>
<div class="r" style="left:927px;top:642px;width:15px;height:15px;background:#fafafa"></div>
<div class="r" style="left:942px;top:642px;width:15px;height:15px;background:#fafafa"></div>
<div class="r" style="left:957px;top:642px;width:15px;height:15px;background:#fafafa"></div>
<div class="r" style="left:972px;top:642px;width:2px;height:15px;background:#fafafa"></div>
<div class="r" style="left:687px;top:657px;width:15px;height:15px;background:#fefefe"></div>
<div class="r" style="left:702px;top:657px;width:15px;height:15px;background:#fefefe"></div>
<div class="r" style="left:717px;top:657px;width:15px;height:15px;background:#fefefe"></div>
<div class="r" style="left:732px;top:657px;width:15px;height:15px;background:#fefefe"></div>
<div class="r" style="left:747px;top:657px;width:15px;height:15px;background:#fefefe"></div>
<div class="r" style="left:762px;top:657px;width:15px;height:15px;background:#fefefe"></div>
<div class="r" style="left:777px;top:657px;width:15px;height:15px;background:#fefefe"></div>
<div class="r" style="left:792px;top:657px;width:15px;height:15px;background:#fefefe"></div>
<div class="r" style="left:807px;top:657px;width:15px;height:15px;background:#fefefe"></div>
<div class="r" style="left:822px;top:657px;width:15px;height:15px;background:#fefefe"></div>
<div class="r" style="left:837px;top:657px;width:15px;height:15px;background:#fefefe"></div>
<div class="r" style="left:852px;top:657px;width:15px;height:15px;background:#fefefe"></div>
<div class="r" style="left:867px;top:657px;width:15px;height:15px;background:#fefefe"></div>
<div class="r" style="left:882px;top:657px;width:15px;height:15px;background:#fefefe"></div>
<div class="r" style="left:897px;top:657px;width:15px;height:15px;background:#fefefe"></div>
<div class="r" style="left:912px;top:657px;width:15px;height:15px;background:#fefefe"></div>
<div class="r" style="left:927px;top:657px;width:15px;height:15px;background:#fefefe"></div>
<div class="r" style="left:942px;top:657px;width:15px;height:15px;background:#fefefe"></div>
<div class="r" style="left:957px;top:657px;width:15px;height:15px;background:#fefefe"></div>
<div class="r" style="left:972px;top:657px;width:2px;height:15px;background:#fefefe"></div>
<div class="r" style="left:687px;top:672px;width:15px;height:15px;background:#eeeeee"></div>
<div class="r" style="left:702px;top:672px;width:15px;height:15px;background:#e6e6e6"></div>
<div class="r" style="left:717px;top:672px;width:15px;height:15px;background:#efefef"></div>
<div class="r" style="left:732px;top:672px;width:15px;height:15px;background:#efefef"></div>
<div class="r" style="left:747px;top:672px;width:15px;height:15px;background:#ededed"></div>
<div class="r" style="left:762px;top:672px;width:15px;height:15px;background:#ededed"></div>
<div class="r" style="left:777px;top:672px;width:15px;height:15px;background:#ebebeb"></div>
<div class="r" style="left:792px;top:672px;width:15px;height:15px;background:#efefef"></div>
<div class="r" style="left:807px;top:672px;width:15px;height:15px;background:#f0f0f0"></div>
<div class="r" style="left:822px;top:672px;width:15px;height:15px;background:#eeeeee"></div>
<div class="r" style="left:837px;top:672px;width:15px;height:15px;background:#fefefe"></div>
<div class="r" style="left:852px;top:672px;width:15px;height:15px;background:#fefefe"></div>
<div class="r" style="left:867px;top:672px;width:15px;height:15px;background:#fefefe"></div>
<div class="r" style="left:882px;top:672px;width:15px;height:15px;background:#fefefe"></div>
<div class="r" style="left:897px;top:672px;width:15px;height:15px;background:#fefefe"></div>
<div class="r" style="left:912px;top:672px;width:15px;height:15px;background:#fefefe"></div>
<div class="r" style="left:927px;top:672px;width:15px;height:15px;background:#fefefe"></div>
<div class="r" style="left:942px;top:672px;width:15px;height:15px;background:#fefefe"></div>
<div class="r" style="left:957px;top:672px;width:15px;height:15px;background:#fefefe"></div>
<div class="r" style="left:972px;top:672px;width:2px;height:15px;background:#fefefe"></div>
<div class="r" style="left:687px;top:687px;width:15px;height:15px;background:#fafafa"></div>
<div class="r" style="left:702px;top:687px;width:15px;height:15px;background:#fafafa"></div>
<div class="r" style="left:717px;top:687px;width:15px;height:15px;background:#fafafa"></div>
<div class="r" style="left:732px;top:687px;width:15px;height:15px;background:#fafafa"></div>
<div class="r" style="left:747px;top:687px;width:15px;height:15px;background:#fafafa"></div>
<div class="r" style="left:762px;top:687px;width:15px;height:15px;background:#fafafa"></div>
<div class="r" style="left:777px;top:687px;width:15px;height:15px;background:#fafafa"></div>
<div class="r" style="left:792px;top:687px;width:15px;height:15px;background:#fafafa"></div>
<div class="r" style="left:807px;top:687px;width:15px;height:15px;background:#fafafa"></div>
<div class="r" style="left:822px;top:687px;width:15px;height:15px;background:#fafafa"></div>
<div class="r" style="left:837px;top:687px;width:15px;height:15px;background:#fafafa"></div>
<div class="r" style="left:852px;top:687px;width:15px;height:15px;background:#fafafa"></div>
<div class="r" style="left:867px;top:687px;width:15px;height:15px;background:#fafafa"></div>
<div class="r" style="left:882px;top:687px;width:15px;height:15px;background:#fafafa"></div>
<div class="r" style="left:897px;top:687px;width:15px;height:15px;background:#fafafa"></div>
<div class="r" style="left:912px;top:687px;width:15px;height:15px;background:#fafafa"></div>
<div class="r" style="left:927px;top:687px;width:15px;height:15px;background:#fafafa"></div>
<div class="r" style="left:942px;top:687px;width:15px;height:15px;background:#fafafa"></div>
<div class="r" style="left:957px;top:687px;width:15px;height:15px;background:#fafafa"></div>
<div class="r" style="left:972px;top:687px;width:2px;height:15px;background:#fafafa"></div>
<div class="r" style="left:687px;top:702px;width:15px;height:15px;background:#fdfdfd"></div>
<div class="r" style="left:702px;top:702px;width:15px;height:15px;background:#fefefe"></div>
<div class="r" style="left:717px;top:702px;width:15px;height:15px;background:#fefefe"></div>
<div class="r" style="left:732px;top:702px;width:15px;height:15px;background:#fefefe"></div>
<div class="r" style="left:747px;top:702px;width:15px;height:15px;background:#fefefe"></div>
<div class="r" style="left:762px;top:702px;width:15px;height:15px;background:#fefefe"></div>
<div class="r" style="left:777px;top:702px;width:15px;height:15px;background:#fefefe"></div>
<div class="r" style="left:792px;top:702px;width:15px;height:15px;background:#fefefe"></div>
<div class="r" style="left:807px;top:702px;width:15px;height:15px;background:#fefefe"></div>
<div class="r" style="left:822px;top:702px;width:15px;height:15px;background:#fefefe"></div>
<div class="r" style="left:837px;top:702px;width:15px;height:15px;background:#fefefe"></div>
<div class="r" style="left:852px;top:702px;width:15px;height:15px;background:#fefefe"></div>
<div class="r" style="left:867px;top:702px;width:15px;height:15px;background:#fefefe"></div>
<div class="r" style="left:882px;top:702px;width:15px;height:15px;background:#fefefe"></div>
<div class="r" style="left:897px;top:702px;width:15px;height:15px;background:#fefefe"></div>
<div class="r" style="left:912px;top:702px;width:15px;height:15px;background:#fefefe"></div>
<div class="r" style="left:927px;top:702px;width:15px;height:15px;background:#fefefe"></div>
<div class="r" style="left:942px;top:702px;width:15px;height:15px;background:#fefefe"></div>
<div class="r" style="left:957px;top:702px;width:15px;height:15px;background:#fefefe"></div>
<div class="r" style="left:972px;top:702px;width:2px;height:15px;background:#fefefe"></div>
<div class="r" style="left:687px;top:717px;width:15px;height:15px;background:#f3f3f3"></div>
<div class="r" style="left:702px;top:717px;width:15px;height:15px;background:#fefefe"></div>
<div class="r" style="left:717px;top:717px;width:15px;height:15px;background:#fefefe"></div>
<div class="r" style="left:732px;top:717px;width:15px;height:15px;background:#fefefe"></div>
<div class="r" style="left:747px;top:717px;width:15px;height:15px;background:#fefefe"></div>
<div class="r" style="left:762px;top:717px;width:15px;height:15px;background:#fefefe"></div>
<div class="r" style="left:777px;top:717px;width:15px;height:15px;background:#fefefe"></div>
<div class="r" style="left:792px;top:717px;width:15px;height:15px;background:#fefefe"></div>
<div class="r" style="left:807px;top:717px;width:15px;height:15px;background:#fefefe"></div>
<div class="r" style="left:822px;top:717px;width:15px;height:15px;background:#fefefe"></div>
<div class="r" style="left:837px;top:717px;width:15px;height:15px;background:#fefefe"></div>
<div class="r" style="left:852px;top:717px;width:15px;height:15px;background:#fefefe"></div>
<div class="r" style="left:867px;top:717px;width:15px;height:15px;background:#fefefe"></div>
<div class="r" style="left:882px;top:717px;width:15px;height:15px;background:#fefefe"></div>
<div class="r" style="left:897px;top:717px;width:15px;height:15px;background:#fefefe"></div>
<div class="r" style="left:912px;top:717px;width:15px;height:15px;background:#fefefe"></div>
<div class="r" style="left:927px;top:717px;width:15px;height:15px;background:#fefefe"></div>
<div class="r" style="left:942px;top:717px;width:15px;height:15px;background:#fefefe"></div>
<div class="r" style="left:957px;top:717px;width:15px;height:15px;background:#fefefe"></div>
<div class="r" style="left:972px;top:717px;width:2px;height:15px;background:#fefefe"></div>
<div class="r" style="left:687px;top:732px;width:15px;height:15px;background:#fafafa"></div>
<div class="r" style="left:702px;top:732px;width:15px;height:15px;background:#fafafa"></div>
<div class="r" style="left:717px;top:732px;width:15px;height:15px;background:#fafafa"></div>
<div class="r" style="left:732px;top:732px;width:15px;height:15px;background:#fafafa"></div>
<div class="r" style="left:747px;top:732px;width:15px;height:15px;background:#fafafa"></div>
<div class="r" style="left:762px;top:732px;width:15px;height:15px;background:#fafafa"></div>
<div class="r" style="left:777px;top:732px;width:15px;height:15px;background:#fafafa"></div>
<div class="r" style="left:792px;top:732px;width:15px;height:15px;background:#fafafa"></div>
<div class="r" style="left:807px;top:732px;width:15px;height:15px;background:#fafafa"></div>
<div class="r" style="left:822px;top:732px;width:15px;height:15px;background:#fafafa"></div>
<div class="r" style="left:837px;top:732px;width:15px;height:15px;background:#fafafa"></div>
<div class="r" style="left:852px;top:732px;width:15px;height:15px;background:#fafafa"></div>
<div class="r" style="left:867px;top:732px;width:15px;height:15px;background:#fafafa"></div>
<div class="r" style="left:882px;top:732px;width:15px;height:15px;background:#fafafa"></div>
<div class="r" style="left:897px;top:732px;width:15px;height:15px;background:#fafafa"></div>
<div class="r" style="left:912px;top:732px;width:15px;height:15px;background:#fafafa"></div>
<div class="r" style="left:927px;top:732px;width:15px;height:15px;background:#fafafa"></div>
<div class="r" style="left:942px;top:732px;width:15px;height:15px;background:#fafafa"></div>
<div class="r" style="left:957px;top:732px;width:15px;height:15px;background:#fafafa"></div>
<div class="r" style="left:972px;top:732px;width:2px;height:15px;background:#fafafa"></div>
<div class="r" style="left:687px;top:747px;width:15px;height:15px;background:#f2f2f2"></div>
<div class="r" style="left:702px;top:747px;width:15px;height:15px;background:#f4f4f4"></div>
<div class="r" style="left:717px;top:747px;width:15px;height:15px;background:#f7f7f7"></div>
<div class="r" style="left:732px;top:747px;width:15px;height:15px;background:#f6f6f6"></div>
<div class="r" style="left:747px;top:747px;width:15px;height:15px;background:#f6f6f6"></div>
<div class="r" style="left:762px;top:747px;width:15px;height:15px;background:#f5f5f5"></div>
<div class="r" style="left:777px;top:747px;width:15px;height:15px;background:#f7f7f7"></div>
<div class="r" style="left:792px;top:747px;width:15px;height:15px;background:#f2f2f2"></div>
<div class="r" style="left:807px;top:747px;width:15px;height:15px;background:#f1f1f1"></div>
<div class="r" style="left:822px;top:747px;width:15px;height:15px;background:#f5f5f5"></div>
<div class="r" style="left:837px;top:747px;width:15px;height:15px;background:#f5f5f5"></div>
<div class="r" style="left:852px;top:747px;width:15px;height:15px;background:#f7f7f7"></div>
<div class="r" style="left:867px;top:747px;width:15px;height:15px;background:#f7f7f7"></div>
<div class="r" style="left:882px;top:747px;width:15px;height:15px;background:#f6f6f6"></div>
<div class="r" style="left:897px;top:747px;width:15px;height:15px;background:#f6f6f6"></div>
<div class="r" style="left:912px;top:747px;width:15px;height:15px;background:#f2f2f2"></div>
<div class="r" style="left:927px;top:747px;width:15px;height:15px;background:#f7f7f7"></div>
<div class="r" style="left:942px;top:747px;width:15px;height:15px;background:#f8f8f8"></div>
<div class="r" style="left:957px;top:747px;width:15px;height:15px;background:#fefefe"></div>
<div class="r" style="left:972px;top:747px;width:2px;height:15px;background:#fefefe"></div>
<div class="r" style="left:687px;top:762px;width:15px;height:15px;background:#efefef"></div>
<div class="r" style="left:702px;top:762px;width:15px;height:15px;background:#f3f3f3"></div>
<div class="r" style="left:717px;top:762px;width:15px;height:15px;background:#f6f6f6"></div>
<div class="r" style="left:732px;top:762px;width:15px;height:15px;background:#f2f2f2"></div>
<div class="r" style="left:747px;top:762px;width:15px;height:15px;background:#f7f7f7"></div>
<div class="r" style="left:762px;top:762px;width:15px;height:15px;background:#f3f3f3"></div>
<div class="r" style="left:777px;top:762px;width:15px;height:15px;background:#efefef"></div>
<div class="r" style="left:792px;top:762px;width:15px;height:15px;background:#f0f0f0"></div>
<div class="r" style="left:807px;top:762px;width:15px;height:15px;background:#f1f1f1"></div>
<div class="r" style="left:822px;top:762px;width:15px;height:15px;background:#f5f5f5"></div>
<div class="r" style="left:837px;top:762px;width:15px;height:15px;background:#f4f4f4"></div>
<div class="r" style="left:852px;top:762px;width:15px;height:15px;background:#f5f5f5"></div>
<div class="r" style="left:867px;top:762px;width:15px;height:15px;background:#f1f1f1"></div>
<div class="r" style="left:882px;top:762px;width:15px;height:15px;background:#f2f2f2"></div>
<div class="r" style="left:897px;top:762px;width:15px;height:15px;background:#f0f0f0"></div>
<div class="r" style="left:912px;top:762px;width:15px;height:15px;background:#f4f4f4"></div>
<div class="r" style="left:927px;top:762px;width:15px;height:15px;background:#f5f5f5"></div>
<div class="r" style="left:942px;top:762px;width:15px;height:15px;background:#f0f0f0"></div>
<div class="r" style="left:957px;top:762px;width:15px;height:15px;background:#fefefe"></div>
<div class="r" style="left:972px;top:762px;width:2px;height:15px;background:#fefefe"></div>
<div class="r" style="left:687px;top:777px;width:15px;height:15px;background:#fafafa"></div>
<div class="r" style="left:702px;top:777px;width:15px;height:15px;background:#fafafa"></div>
<div class="r" style="left:717px;top:777px;width:15px;height:15px;background:#fafafa"></div>
<div class="r" style="left:732px;top:777px;width:15px;height:15px;background:#fafafa"></div>
<div class="r" style="left:747px;top:777px;width:15px;height:15px;background:#fafafa"></div>
<div class="r" style="left:762px;top:777px;width:15px;height:15px;background:#fafafa"></div>
<div class="r" style="left:777px;top:777px;width:15px;height:15px;background:#fafafa"></div>
<div class="r" style="left:792px;top:777px;width:15px;height:15px;background:#fafafa"></div>
<div class="r" style="left:807px;top:777px;width:15px;height:15px;background:#fafafa"></div>
<div class="r" style="left:822px;top:777px;width:15px;height:15px;background:#fafafa"></div>
<div class="r" style="left:837px;top:777px;width:15px;height:15px;background:#fafafa"></div>
<div class="r" style="left:852px;top:777px;width:15px;height:15px;background:#fafafa"></div>
<div class="r" style="left:867px;top:777px;width:15px;height:15px;background:#fafafa"></div>
<div class="r" style="left:882px;top:777px;width:15px;height:15px;background:#fafafa"></div>
<div class="r" style="left:897px;top:777px;width:15px;height:15px;background:#fafafa"></div>
<div class="r" style="left:912px;top:777px;width:15px;height:15px;background:#fafafa"></div>
<div class="r" style="left:927px;top:777px;width:15px;height:15px;background:#fafafa"></div>
<div class="r" style="left:942px;top:777px;width:15px;height:15px;background:#fafafa"></div>
<div class="r" style="left:957px;top:777px;width:15px;height:15px;background:#fafafa"></div>
<div class="r" style="left:972px;top:777px;width:2px;height:15px;background:#fafafa"></div>
<div class="r" style="left:687px;top:792px;width:15px;height:15px;background:#eaeaea"></div>
<div class="r" style="left:702px;top:792px;width:15px;height:15px;background:#ececec"></div>
<div class="r" style="left:717px;top:792px;width:15px;height:15px;background:#ececec"></div>
<div class="r" style="left:732px;top:792px;width:15px;height:15px;background:#ececec"></div>
<div class="r" style="left:747px;top:792px;width:15px;height:15px;background:#ededed"></div>
<div class="r" style="left:762px;top:792px;width:15px;height:15px;background:#f2f2f2"></div>
<div class="r" style="left:777px;top:792px;width:15px;height:15px;background:#efefef"></div>
<div class="r" style="left:792px;top:792px;width:15px;height:15px;background:#fefefe"></div>
<div class="r" style="left:807px;top:792px;width:15px;height:15px;background:#fefefe"></div>
<div class="r" style="left:822px;top:792px;width:15px;height:15px;background:#fefefe"></div>
<div class="r" style="left:837px;top:792px;width:15px;height:15px;background:#fefefe"></div>
<div class="r" style="left:852px;top:792px;width:15px;height:15px;background:#fefefe"></div>
<div class="r" style="left:867px;top:792px;width:15px;height:15px;background:#fefefe"></div>
<div class="r" style="left:882px;top:792px;width:15px;height:15px;background:#fefefe"></div>
<div class="r" style="left:897px;top:792px;width:15px;height:15px;background:#fefefe"></div>
<div class="r" style="left:912px;top:792px;width:15px;height:15px;background:#fefefe"></div>
<div class="r" style="left:927px;top:792px;width:15px;height:15px;background:#fefefe"></div>
<div class="r" style="left:942px;top:792px;width:15px;height:15px;background:#fefefe"></div>
<div class="r" style="left:957px;top:792px;width:15px;height:15px;background:#fefefe"></div>
<div class="r" style="left:972px;top:792px;width:2px;height:15px;background:#fefefe"></div>
<div class="r" style="left:687px;top:807px;width:15px;height:15px;background:#f9f9f9"></div>
<div class="r" style="left:702px;top:807px;width:15px;height:15px;background:#fafafa"></div>
<div class="r" style="left:717px;top:807px;width:15px;height:15px;background:#fafafa"></div>
<div class="r" style="left:732px;top:807px;width:15px;height:15px;background:#f9f9f9"></div>
<div class="r" style="left:747px;top:807px;width:15px;height:15px;background:#f9f9f9"></div>
<div class="r" style="left:762px;top:807px;width:15px;height:15px;background:#f7f7f7"></div>
<div class="r" style="left:777px;top:807px;width:15px;height:15px;background:#f6f6f6"></div>
<div class="r" style="left:792px;top:807px;width:15px;height:15px;background:#fefefe"></div>
<div class="r" style="left:807px;top:807px;width:15px;height:15px;background:#fefefe"></div>
<div class="r" style="left:822px;top:807px;width:15px;height:15px;background:#fefefe"></div>
<div class="r" style="left:837px;top:807px;width:15px;height:15px;background:#fefefe"></div>
<div class="r" style="left:852px;top:807px;width:15px;height:15px;background:#fefefe"></div>
<div class="r" style="left:867px;top:807px;width:15px;height:15px;background:#fefefe"></div>
<div class="r" style="left:882px;top:807px;width:15px;height:15px;background:#fefefe"></div>
<div class="r" style="left:897px;top:807px;width:15px;height:15px;background:#fefefe"></div>
<div class="r" style="left:912px;top:807px;width:15px;height:15px;background:#fefefe"></div>
<div class="r" style="left:927px;top:807px;width:15px;height:15px;background:#fefefe"></div>
<div class="r" style="left:942px;top:807px;width:15px;height:15px;background:#fefefe"></div>
<div class="r" style="left:957px;top:807px;width:15px;height:15px;background:#fefefe"></div>
<div class="r" style="left:972px;top:807px;width:2px;height:15px;background:#fefefe"></div>
<div class="r" style="left:687px;top:822px;width:15px;height:15px;background:#fafafa"></div>
<div class="r" style="left:702px;top:822px;width:15px;height:15px;background:#fafafa"></div>
<div class="r" style="left:717px;top:822px;width:15px;height:15px;background:#fafafa"></div>
<div class="r" style="left:732px;top:822px;width:15px;height:15px;background:#fafafa"></div>
<div class="r" style="left:747px;top:822px;width:15px;height:15px;background:#fafafa"></div>
<div class="r" style="left:762px;top:822px;width:15px;height:15px;background:#fafafa"></div>
<div class="r" style="left:777px;top:822px;width:15px;height:15px;background:#fafafa"></div>
<div class="r" style="left:792px;top:822px;width:15px;height:15px;background:#fafafa"></div>
<div class="r" style="left:807px;top:822px;width:15px;height:15px;background:#fafafa"></div>
<div class="r" style="left:822px;top:822px;width:15px;height:15px;background:#fafafa"></div>
<div class="r" style="left:837px;top:822px;width:15px;height:15px;background:#fafafa"></div>
<div class="r" style="left:852px;top:822px;width:15px;height:15px;background:#fafafa"></div>
<div class="r" style="left:867px;top:822px;width:15px;height:15px;background:#fafafa"></div>
<div class="r" style="left:882px;top:822px;width:15px;height:15px;background:#fafafa"></div>
<div class="r" style="left:897px;top:822px;width:15px;height:15px;background:#fafafa"></div>
<div class="r" style="left:912px;top:822px;width:15px;height:15px;background:#fafafa"></div>
<div class="r" style="left:927px;top:822px;width:15px;height:15px;background:#fafafa"></div>
<div class="r" style="left:942px;top:822px;width:15px;height:15px;background:#fafafa"></div>
<div class="r" style="left:957px;top:822px;width:15px;height:15px;background:#fafafa"></div>
<div class="r" style="left:972px;top:822px;width:2px;height:15px;background:#fafafa"></div>
<div class="r" style="left:687px;top:837px;width:15px;height:15px;background:#ebebeb"></div>
<div class="r" style="left:702px;top:837px;width:15px;height:15px;background:#e4e4e4"></div>
<div class="r" style="left:717px;top:837px;width:15px;height:15px;background:#e3e3e3"></div>
<div class="r" style="left:732px;top:837px;width:15px;height:15px;background:#e4e4e4"></div>
<div class="r" style="left:747px;top:837px;width:15px;height:15px;background:#ececec"></div>
<div class="r" style="left:762px;top:837px;width:15px;height:15px;background:#eeeeee"></div>
<div class="r" style="left:777px;top:837px;width:15px;height:15px;background:#eeeeee"></div>
<div class="r" style="left:792px;top:837px;width:15px;height:15px;background:#eeeeee"></div>
<div class="r" style="left:807px;top:837px;width:15px;height:15px;background:#eeeeee"></div>
<div class="r" style="left:822px;top:837px;width:15px;height:15px;background:#e8e8e8"></div>
<div class="r" style="left:837px;top:837px;width:15px;height:15px;background:#e4e4e4"></div>
<div class="r" style="left:852px;top:837px;width:15px;height:15px;background:#e5e5e5"></div>
<div class="r" style="left:867px;top:837px;width:15px;height:15px;background:#fefefe"></div>
<div class="r" style="left:882px;top:837px;width:15px;height:15px;background:#fefefe"></div>
<div class="r" style="left:897px;top:837px;width:15px;height:15px;background:#fefefe"></div>
<div class="r" style="left:912px;top:837px;width:15px;height:15px;background:#fefefe"></div>
<div class="r" style="left:927px;top:837px;width:15px;height:15px;background:#fefefe"></div>
<div class="r" style="left:942px;top:837px;width:15px;height:15px;background:#fefefe"></div>
<div class="r" style="left:957px;top:837px;width:15px;height:15px;background:#fefefe"></div>
<div class="r" style="left:972px;top:837px;width:2px;height:15px;background:#fefefe"></div>
<div class="r" style="left:687px;top:852px;width:15px;height:15px;background:#fafafa"></div>
<div class="r" style="left:702px;top:852px;width:15px;height:15px;background:#fafafa"></div>
<div class="r" style="left:717px;top:852px;width:15px;height:15px;background:#fafafa"></div>
<div class="r" style="left:732px;top:852px;width:15px;height:15px;background:#fafafa"></div>
<div class="r" style="left:747px;top:852px;width:15px;height:15px;background:#fafafa"></div>
<div class="r" style="left:762px;top:852px;width:15px;height:15px;background:#fafafa"></div>
<div class="r" style="left:777px;top:852px;width:15px;height:15px;background:#fafafa"></div>
<div class="r" style="left:792px;top:852px;width:15px;height:15px;background:#fafafa"></div>
<div class="r" style="left:807px;top:852px;width:15px;height:15px;background:#fafafa"></div>
<div class="r" style="left:822px;top:852px;width:15px;height:15px;background:#fafafa"></div>
<div class="r" style="left:837px;top:852px;width:15px;height:15px;background:#fafafa"></div>
<div class="r" style="left:852px;top:852px;width:15px;height:15px;background:#fafafa"></div>
<div class="r" style="left:867px;top:852px;width:15px;height:15px;background:#fafafa"></div>
<div class="r" style="left:882px;top:852px;width:15px;height:15px;background:#fafafa"></div>
<div class="r" style="left:897px;top:852px;width:15px;height:15px;background:#fafafa"></div>
<div class="r" style="left:912px;top:852px;width:15px;height:15px;background:#fafafa"></div>
<div class="r" style="left:927px;top:852px;width:15px;height:15px;background:#fafafa"></div>
<div class="r" style="left:942px;top:852px;width:15px;height:15px;background:#fafafa"></div>
<div class="r" style="left:957px;top:852px;width:15px;height:15px;background:#fafafa"></div>
<div class="r" style="left:972px;top:852px;width:2px;height:15px;background:#fafafa"></div>
<div class="r" style="left:687px;top:867px;width:15px;height:15px;background:#fefefe"></div>
<div class="r" style="left:702px;top:867px;width:15px;height:15px;background:#fefefe"></div>
<div class="r" style="left:717px;top:867px;width:15px;height:15px;background:#fefefe"></div>
<div class="r" style="left:732px;top:867px;width:15px;height:15px;background:#fefefe"></div>
<div class="r" style="left:747px;top:867px;width:15px;height:15px;background:#fefefe"></div>
<div class="r" style="left:762px;top:867px;width:15px;height:15px;background:#fefefe"></div>
<div class="r" style="left:777px;top:867px;width:15px;height:15px;background:#fefefe"></div>
<div class="r" style="left:792px;top:867px;width:15px;height:15px;background:#fefefe"></div>
<div class="r" style="left:807px;top:867px;width:15px;height:15px;background:#fefefe"></div>
<div class="r" style="left:822px;top:867px;width:15px;height:15px;background:#fefefe"></div>
<div class="r" style="left:837px;top:867px;width:15px;height:15px;background:#fefefe"></div>
<div class="r" style="left:852px;top:867px;width:15px;height:15px;background:#fefefe"></div>
<div class="r" style="left:867px;top:867px;width:15px;height:15px;background:#fefefe"></div>
<div class="r" style="left:882px;top:867px;width:15px;height:15px;background:#fefefe"></div>
<div class="r" style="left:897px;top:867px;width:15px;height:15px;background:#fefefe"></div>
<div class="r" style="left:912px;top:867px;width:15px;height:15px;background:#fefefe"></div>
<div class="r" style="left:927px;top:867px;width:15px;height:15px;background:#fefefe"></div>
<div class="r" style="left:942px;top:867px;width:15px;height:15px;background:#fefefe"></div>
<div class="r" style="left:957px;top:867px;width:15px;height:15px;background:#fefefe"></div>
<div class="r" style="left:972px;top:867px;width:2px;height:15px;background:#fefefe"></div>
<div class="r" style="left:687px;top:882px;width:15px;height:15px;background:#e3e3e3"></div>
<div class="r" style="left:702px;top:882px;width:15px;height:15px;background:#e1e1e1"></div>
<div class="r" style="left:717px;top:882px;width:15px;height:15px;background:#e6e6e6"></div>
<div class="r" style="left:732px;top:882px;width:15px;height:15px;background:#ebebeb"></div>
<div class="r" style="left:747px;top:882px;width:15px;height:15px;background:#e7e7e7"></div>
<div class="r" style="left:762px;top:882px;width:15px;height:15px;background:#eeeeee"></div>
<div class="r" style="left:777px;top:882px;width:15px;height:15px;background:#f0f0f0"></div>
<div class="r" style="left:792px;top:882px;width:15px;height:15px;background:#e1e1e1"></div>
<div class="r" style="left:807px;top:882px;width:15px;height:15px;background:#e6e6e6"></div>
<div class="r" style="left:822px;top:882px;width:15px;height:15px;background:#e8e8e8"></div>
<div class="r" style="left:837px;top:882px;width:15px;height:15px;background:#fefefe"></div>
<div class="r" style="left:852px;top:882px;width:15px;height:15px;background:#fefefe"></div>
<div class="r" style="left:867px;top:882px;width:15px;height:15px;background:#fefefe"></div>
<div class="r" style="left:882px;top:882px;width:15px;height:15px;background:#fefefe"></div>
<div class="r" style="left:897px;top:882px;width:15px;height:15px;background:#fefefe"></div>
<div class="r" style="left:912px;top:882px;width:15px;height:15px;background:#fefefe"></div>
<div class="r" style="left:927px;top:882px;width:15px;height:15px;background:#fefefe"></div>
<div class="r" style="left:942px;top:882px;width:15px;height:15px;background:#fefefe"></div>
<div class="r" style="left:957px;top:882px;width:15px;height:15px;background:#fefefe"></div>
<div class="r" style="left:972px;top:882px;width:2px;height:15px;background:#fefefe"></div>
<div class="r" style="left:687px;top:897px;width:15px;height:15px;background:#fafafa"></div>
<div class="r" style="left:702px;top:897px;width:15px;height:15px;background:#fafafa"></div>
<div class="r" style="left:717px;top:897px;width:15px;height:15px;background:#fafafa"></div>
<div class="r" style="left:732px;top:897px;width:15px;height:15px;background:#fafafa"></div>
<div class="r" style="left:747px;top:897px;width:15px;height:15px;background:#fafafa"></div>
<div class="r" style="left:762px;top:897px;width:15px;height:15px;background:#fafafa"></div>
<div class="r" style="left:777px;top:897px;width:15px;height:15px;background:#fafafa"></div>
<div class="r" style="left:792px;top:897px;width:15px;height:15px;background:#fafafa"></div>
<div class="r" style="left:807px;top:897px;width:15px;height:15px;background:#fafafa"></div>
<div class="r" style="left:822px;top:897px;width:15px;height:15px;background:#fafafa"></div>
<div class="r" style="left:837px;top:897px;width:15px;height:15px;background:#fafafa"></div>
<div class="r" style="left:852px;top:897px;width:15px;height:15px;background:#fafafa"></div>
<div class="r" style="left:867px;top:897px;width:15px;height:15px;background:#fafafa"></div>
<div class="r" style="left:882px;top:897px;width:15px;height:15px;background:#fafafa"></div>
<div class="r" style="left:897px;top:897px;width:15px;height:15px;background:#fafafa"></div>
<div class="r" style="left:912px;top:897px;width:15px;height:15px;background:#fafafa"></div>
<div class="r" style="left:927px;top:897px;width:15px;height:15px;background:#fafafa"></div>
<div class="r" style="left:942px;top:897px;width:15px;height:15px;background:#fafafa"></div>
<div class="r" style="left:957px;top:897px;width:15px;height:15px;background:#fafafa"></div>
<div class="r" style="left:972px;top:897px;width:2px;height:15px;background:#fafafa"></div>
<div class="r" style="left:687px;top:912px;width:15px;height:15px;background:#f2f7fa"></div>
<div class="r" style="left:702px;top:912px;width:15px;height:15px;background:#fbfbfb"></div>
<div class="r" style="left:717px;top:912px;width:15px;height:15px;background:#fdfdfd"></div>
<div class="r" style="left:732px;top:912px;width:15px;height:15px;background:#fdfdfd"></div>
<div class="r" style="left:747px;top:912px;width:15px;height:15px;background:#fdfdfd"></div>
<div class="r" style="left:762px;top:912px;width:15px;height:15px;background:#fdfdfd"></div>
<div class="r" style="left:777px;top:912px;width:15px;height:15px;background:#fdfdfd"></div>
<div class="r" style="left:792px;top:912px;width:15px;height:15px;background:#fcfcfc"></div>
<div class="r" style="left:807px;top:912px;width:15px;height:15px;background:#fcfcfc"></div>
<div class="r" style="left:822px;top:912px;width:15px;height:15px;background:#fcfcfc"></div>
<div class="r" style="left:837px;top:912px;width:15px;height:15px;background:#fcfcfc"></div>
<div class="r" style="left:852px;top:912px;width:15px;height:15px;background:#fcfcfc"></div>
<div class="r" style="left:867px;top:912px;width:15px;height:15px;background:#fefefe"></div>
<div class="r" style="left:882px;top:912px;width:15px;height:15px;background:#fdfdfd"></div>
<div class="r" style="left:897px;top:912px;width:15px;height:15px;background:#fcfcfc"></div>
<div class="r" style="left:912px;top:912px;width:15px;height:15px;background:#fdfdfd"></div>
<div class="r" style="left:927px;top:912px;width:15px;height:15px;background:#fcfcfc"></div>
<div class="r" style="left:942px;top:912px;width:15px;height:15px;background:#fefefe"></div>
<div class="r" style="left:957px;top:912px;width:15px;height:15px;background:#fefefe"></div>
<div class="r" style="left:972px;top:912px;width:2px;height:15px;background:#fefefe"></div>
<div class="r" style="left:687px;top:927px;width:15px;height:10px;background:#c8ddec"></div>
<div class="r" style="left:702px;top:927px;width:15px;height:10px;background:#f0f0f0"></div>
<div class="r" style="left:717px;top:927px;width:15px;height:10px;background:#f0f0f0"></div>
<div class="r" style="left:732px;top:927px;width:15px;height:10px;background:#eaeaea"></div>
<div class="r" style="left:747px;top:927px;width:15px;height:10px;background:#ededed"></div>
<div class="r" style="left:762px;top:927px;width:15px;height:10px;background:#ededed"></div>
<div class="r" style="left:777px;top:927px;width:15px;height:10px;background:#eaeaea"></div>
<div class="r" style="left:792px;top:927px;width:15px;height:10px;background:#e9e9e9"></div>
<div class="r" style="left:807px;top:927px;width:15px;height:10px;background:#eeeeee"></div>
<div class="r" style="left:822px;top:927px;width:15px;height:10px;background:#ececec"></div>
<div class="r" style="left:837px;top:927px;width:15px;height:10px;background:#ededed"></div>
<div class="r" style="left:852px;top:927px;width:15px;height:10px;background:#ededed"></div>
<div class="r" style="left:867px;top:927px;width:15px;height:10px;background:#ebebeb"></div>
<div class="r" style="left:882px;top:927px;width:15px;height:10px;background:#eeeeee"></div>
<div class="r" style="left:897px;top:927px;width:15px;height:10px;background:#ededed"></div>
<div class="r" style="left:912px;top:927px;width:15px;height:10px;background:#eeeeee"></div>
<div class="r" style="left:927px;top:927px;width:15px;height:10px;background:#e8e8e8"></div>
<div class="r" style="left:942px;top:927px;width:15px;height:10px;background:#ebebeb"></div>
<div class="r" style="left:957px;top:927px;width:15px;height:10px;background:#fefefe"></div>
<div class="r" style="left:972px;top:927px;width:2px;height:10px;background:#fefefe"></div>
<div class="r" style="left:394px;top:331px;width:15px;height:15px;background:#c1d8e9"></div>
<div class="r" style="left:409px;top:331px;width:15px;height:15px;background:#bfd7e8"></div>
<div class="r" style="left:424px;top:331px;width:15px;height:15px;background:#cfe1ee"></div>
<div class="r" style="left:439px;top:331px;width:15px;height:15px;background:#c8ddeb"></div>
<div class="r" style="left:454px;top:331px;width:15px;height:15px;background:#bfd7e8"></div>
<div class="r" style="left:469px;top:331px;width:7px;height:15px;background:#c1d9e9"></div>
<div class="r" style="left:394px;top:346px;width:15px;height:15px;background:#f9fbfd"></div>
<div class="r" style="left:409px;top:346px;width:15px;height:15px;background:#f9fbfd"></div>
<div class="r" style="left:424px;top:346px;width:15px;height:15px;background:#f9fbfd"></div>
<div class="r" style="left:439px;top:346px;width:15px;height:15px;background:#f4f8fb"></div>
<div class="r" style="left:454px;top:346px;width:15px;height:15px;background:#f8fbfd"></div>
<div class="r" style="left:469px;top:346px;width:7px;height:15px;background:#f5f8fb"></div>
<div class="r" style="left:394px;top:361px;width:15px;height:15px;background:#fafbfc"></div>
<div class="r" style="left:409px;top:361px;width:15px;height:15px;background:#fafbfc"></div>
<div class="r" style="left:424px;top:361px;width:15px;height:15px;background:#fafbfc"></div>
<div class="r" style="left:439px;top:361px;width:15px;height:15px;background:#fafbfc"></div>
<div class="r" style="left:454px;top:361px;width:15px;height:15px;background:#fafbfc"></div>
<div class="r" style="left:469px;top:361px;width:7px;height:15px;background:#fafbfc"></div>
<div class="r" style="left:394px;top:376px;width:15px;height:15px;background:#c4daea"></div>
<div class="r" style="left:409px;top:376px;width:15px;height:15px;background:#aecce2"></div>
<div class="r" style="left:424px;top:376px;width:15px;height:15px;background:#abcbe1"></div>
<div class="r" style="left:439px;top:376px;width:15px;height:15px;background:#c2d9e9"></div>
<div class="r" style="left:454px;top:376px;width:15px;height:15px;background:#accbe1"></div>
<div class="r" style="left:469px;top:376px;width:7px;height:15px;background:#bcd5e7"></div>
<div class="r" style="left:394px;top:391px;width:15px;height:15px;background:#fafbfc"></div>
<div class="r" style="left:409px;top:391px;width:15px;height:15px;background:#fafbfc"></div>
<div class="r" style="left:424px;top:391px;width:15px;height:15px;background:#fafbfc"></div>
<div class="r" style="left:439px;top:391px;width:15px;height:15px;background:#fafbfc"></div>
<div class="r" style="left:454px;top:391px;width:15px;height:15px;background:#fafbfc"></div>
<div class="r" style="left:469px;top:391px;width:7px;height:15px;background:#fafbfc"></div>
<div class="r" style="left:394px;top:406px;width:15px;height:15px;background:#f2f7fa"></div>
<div class="r" style="left:409px;top:406px;width:15px;height:15px;background:#f8fbfd"></div>
<div class="r" style="left:424px;top:406px;width:15px;height:15px;background:#f6f9fc"></div>
<div class="r" style="left:439px;top:406px;width:15px;height:15px;background:#f8fbfd"></div>
<div class="r" style="left:454px;top:406px;width:15px;height:15px;background:#f4f8fb"></div>
<div class="r" style="left:469px;top:406px;width:7px;height:15px;background:#f5f9fc"></div>
<div class="r" style="left:394px;top:421px;width:15px;height:15px;background:#c0d8e9"></div>
<div class="r" style="left:409px;top:421px;width:15px;height:15px;background:#ccdfed"></div>
<div class="r" style="left:424px;top:421px;width:15px;height:15px;background:#c3daea"></div>
<div class="r" style="left:439px;top:421px;width:15px;height:15px;background:#bbd5e7"></div>
<div class="r" style="left:454px;top:421px;width:15px;height:15px;background:#bed7e8"></div>
<div class="r" style="left:469px;top:421px;width:7px;height:15px;background:#cbdeec"></div>
<div class="r" style="left:394px;top:436px;width:15px;height:15px;background:#fafbfc"></div>
<div class="r" style="left:409px;top:436px;width:15px;height:15px;background:#fafbfc"></div>
<div class="r" style="left:424px;top:436px;width:15px;height:15px;background:#fafbfc"></div>
<div class="r" style="left:439px;top:436px;width:15px;height:15px;background:#fafbfc"></div>
<div class="r" style="left:454px;top:436px;width:15px;height:15px;background:#fafbfc"></div>
<div class="r" style="left:469px;top:436px;width:7px;height:15px;background:#fafbfc"></div>
<div class="r" style="left:394px;top:451px;width:15px;height:15px;background:#e5eff6"></div>
<div class="r" style="left:409px;top:451px;width:15px;height:15px;background:#e7f0f6"></div>
<div class="r" style="left:424px;top:451px;width:15px;height:15px;background:#e5eff6"></div>
<div class="r" style="left:439px;top:451px;width:15px;height:15px;background:#edf4f9"></div>
<div class="r" style="left:454px;top:451px;width:15px;height:15px;background:#ecf3f8"></div>
<div class="r" style="left:469px;top:451px;width:7px;height:15px;background:#eef4f9"></div>
<div class="r" style="left:394px;top:466px;width:15px;height:15px;background:#c9ddec"></div>
<div class="r" style="left:409px;top:466px;width:15px;height:15px;background:#d3e4ef"></div>
<div class="r" style="left:424px;top:466px;width:15px;height:15px;background:#d6e6f0"></div>
<div class="r" style="left:439px;top:466px;width:15px;height:15px;background:#d0e2ee"></div>
<div class="r" style="left:454px;top:466px;width:15px;height:15px;background:#c6dceb"></div>
<div class="r" style="left:469px;top:466px;width:7px;height:15px;background:#c8ddeb"></div>
<div class="r" style="left:394px;top:481px;width:15px;height:15px;background:#fafbfc"></div>
<div class="r" style="left:409px;top:481px;width:15px;height:15px;background:#fafbfc"></div>
<div class="r" style="left:424px;top:481px;width:15px;height:15px;background:#fafbfc"></div>
<div class="r" style="left:439px;top:481px;width:15px;height:15px;background:#fafbfc"></div>
<div class="r" style="left:454px;top:481px;width:15px;height:15px;background:#fafbfc"></div>
<div class="r" style="left:469px;top:481px;width:7px;height:15px;background:#fafbfc"></div>
<div class="r" style="left:394px;top:496px;width:15px;height:15px;background:#ddeaf3"></div>
<div class="r" style="left:409px;top:496px;width:15px;height:15px;background:#dfebf4"></div>
<div class="r" style="left:424px;top:496px;width:15px;height:15px;background:#d3e3ef"></div>
<div class="r" style="left:439px;top:496px;width:15px;height:15px;background:#d8e7f1"></div>
<div class="r" style="left:454px;top:496px;width:15px;height:15px;background:#d6e6f0"></div>
<div class="r" style="left:469px;top:496px;width:7px;height:15px;background:#e0ecf4"></div>
<div class="r" style="left:394px;top:511px;width:15px;height:15px;background:#e5eff6"></div>
<div class="r" style="left:409px;top:511px;width:15px;height:15px;background:#dce9f3"></div>
<div class="r" style="left:424px;top:511px;width:15px;height:15px;background:#e0ecf4"></div>
<div class="r" style="left:439px;top:511px;width:15px;height:15px;background:#e5eff6"></div>
<div class="r" style="left:454px;top:511px;width:15px;height:15px;background:#d9e7f1"></div>
<div class="r" style="left:469px;top:511px;width:7px;height:15px;background:#ddeaf3"></div>
<div class="r" style="left:394px;top:526px;width:15px;height:15px;background:#fafbfc"></div>
<div class="r" style="left:409px;top:526px;width:15px;height:15px;background:#fafbfc"></div>
<div class="r" style="left:424px;top:526px;width:15px;height:15px;background:#fafbfc"></div>
<div class="r" style="left:439px;top:526px;width:15px;height:15px;background:#fafbfc"></div>
<div class="r" style="left:454px;top:526px;width:15px;height:15px;background:#fafbfc"></div>
<div class="r" style="left:469px;top:526px;width:7px;height:15px;background:#fafbfc"></div>
<div class="r" style="left:394px;top:541px;width:15px;height:15px;background:#c2d9e9"></div>
<div class="r" style="left:409px;top:541px;width:15px;height:15px;background:#d3e3ef"></div>
<div class="r" style="left:424px;top:541px;width:15px;height:15px;background:#c1d8e9"></div>
<div class="r" style="left:439px;top:541px;width:15px;height:15px;background:#d3e4ef"></div>
<div class="r" style="left:454px;top:541px;width:15px;height:15px;background:#c1d8e9"></div>
<div class="r" style="left:469px;top:541px;width:7px;height:15px;background:#cadeec"></div>
<div class="r" style="left:394px;top:556px;width:15px;height:15px;background:#f5f9fc"></div>
<div class="r" style="left:409px;top:556px;width:15px;height:15px;background:#f8fafc"></div>
<div class="r" style="left:424px;top:556px;width:15px;height:15px;background:#f6f9fc"></div>
<div class="r" style="left:439px;top:556px;width:15px;height:15px;background:#f9fbfd"></div>
<div class="r" style="left:454px;top:556px;width:15px;height:15px;background:#f9fbfd"></div>
<div class="r" style="left:469px;top:556px;width:7px;height:15px;background:#f7fafc"></div>
<div class="r" style="left:394px;top:571px;width:15px;height:15px;background:#fafbfc"></div>
<div class="r" style="left:409px;top:571px;width:15px;height:15px;background:#fafbfc"></div>
<div class="r" style="left:424px;top:571px;width:15px;height:15px;background:#fafbfc"></div>
<div class="r" style="left:439px;top:571px;width:15px;height:15px;background:#fafbfc"></div>
<div class="r" style="left:454px;top:571px;width:15px;height:15px;background:#fafbfc"></div>
<div class="r" style="left:469px;top:571px;width:7px;height:15px;background:#fafbfc"></div>
<div class="r" style="left:394px;top:586px;width:15px;height:15px;background:#bfd7e8"></div>
<div class="r" style="left:409px;top:586px;width:15px;height:15px;background:#b1cfe3"></div>
<div class="r" style="left:424px;top:586px;width:15px;height:15px;background:#bfd7e8"></div>
<div class="r" style="left:439px;top:586px;width:15px;height:15px;background:#b9d3e6"></div>
<div class="r" style="left:454px;top:586px;width:15px;height:15px;background:#c3d9e9"></div>
<div class="r" style="left:469px;top:586px;width:7px;height:15px;background:#bed6e8"></div>
<div class="r" style="left:394px;top:601px;width:15px;height:15px;background:#fafbfc"></div>
<div class="r" style="left:409px;top:601px;width:15px;height:15px;background:#fafbfc"></div>
<div class="r" style="left:424px;top:601px;width:15px;height:15px;background:#fafbfc"></div>
<div class="r" style="left:439px;top:601px;width:15px;height:15px;background:#fafbfc"></div>
<div class="r" style="left:454px;top:601px;width:15px;height:15px;background:#fafbfc"></div>
<div class="r" style="left:469px;top:601px;width:7px;height:15px;background:#fafbfc"></div>
<div class="r" style="left:394px;top:616px;width:15px;height:15px;background:#f8fafc"></div>
<div class="r" style="left:409px;top:616px;width:15px;height:15px;background:#f4f8fb"></div>
<div class="r" style="left:424px;top:616px;width:15px;height:15px;background:#f8fbfd"></div>
<div class="r" style="left:439px;top:616px;width:15px;height:15px;background:#f2f7fa"></div>
<div class="r" style="left:454px;top:616px;width:15px;height:15px;background:#f3f8fb"></div>
<div class="r" style="left:469px;top:616px;width:7px;height:15px;background:#f6f9fc"></div>
<div class="r" style="left:394px;top:631px;width:15px;height:15px;background:#b5d1e5"></div>
<div class="r" style="left:409px;top:631px;width:15px;height:15px;background:#c1d9e9"></div>
<div class="r" style="left:424px;top:631px;width:15px;height:15px;background:#bed7e8"></div>
<div class="r" style="left:439px;top:631px;width:15px;height:15px;background:#b9d4e6"></div>
<div class="r" style="left:454px;top:631px;width:15px;height:15px;background:#b1cee3"></div>
<div class="r" style="left:469px;top:631px;width:7px;height:15px;background:#c3d9e9"></div>
<div class="r" style="left:394px;top:646px;width:15px;height:15px;background:#fafbfc"></div>
<div class="r" style="left:409px;top:646px;width:15px;height:15px;background:#fafbfc"></div>
<div class="r" style="left:424px;top:646px;width:15px;height:15px;background:#fafbfc"></div>
<div class="r" style="left:439px;top:646px;width:15px;height:15px;background:#fafbfc"></div>
<div class="r" style="left:454px;top:646px;width:15px;height:15px;background:#fafbfc"></div>
<div class="r" style="left:469px;top:646px;width:7px;height:15px;background:#fafbfc"></div>
<div class="r" style="left:394px;top:661px;width:15px;height:15px;background:#e6f0f6"></div>
<div class="r" style="left:409px;top:661px;width:15px;height:15px;background:#e8f0f7"></div>
<div class="r" style="left:424px;top:661px;width:15px;height:15px;background:#e8f1f7"></div>
<div class="r" style="left:439px;top:661px;width:15px;height:15px;background:#eaf2f8"></div>
<div class="r" style="left:454px;top:661px;width:15px;height:15px;background:#ebf2f8"></div>
<div class="r" style="left:469px;top:661px;width:7px;height:15px;background:#eef4f9"></div>
<div class="r" style="left:394px;top:676px;width:15px;height:15px;background:#d6e6f0"></div>
<div class="r" style="left:409px;top:676px;width:15px;height:15px;background:#d8e6f1"></div>
<div class="r" style="left:424px;top:676px;width:15px;height:15px;background:#cadeec"></div>
<div class="r" style="left:439px;top:676px;width:15px;height:15px;background:#d4e4f0"></div>
<div class="r" style="left:454px;top:676px;width:15px;height:15px;background:#d6e5f0"></div>
<div class="r" style="left:469px;top:676px;width:7px;height:15px;background:#d7e6f1"></div>
<div class="r" style="left:394px;top:691px;width:15px;height:15px;background:#fafbfc"></div>
<div class="r" style="left:409px;top:691px;width:15px;height:15px;background:#fafbfc"></div>
<div class="r" style="left:424px;top:691px;width:15px;height:15px;background:#fafbfc"></div>
<div class="r" style="left:439px;top:691px;width:15px;height:15px;background:#fafbfc"></div>
<div class="r" style="left:454px;top:691px;width:15px;height:15px;background:#fafbfc"></div>
<div class="r" style="left:469px;top:691px;width:7px;height:15px;background:#fafbfc"></div>
<div class="r" style="left:394px;top:706px;width:15px;height:15px;background:#d4e4f0"></div>
<div class="r" style="left:409px;top:706px;width:15px;height:15px;background:#d3e4ef"></div>
<div class="r" style="left:424px;top:706px;width:15px;height:15px;background:#d7e6f1"></div>
<div class="r" style="left:439px;top:706px;width:15px;height:15px;background:#ddeaf3"></div>
<div class="r" style="left:454px;top:706px;width:15px;height:15px;background:#deeaf3"></div>
<div class="r" style="left:469px;top:706px;width:7px;height:15px;background:#ddeaf3"></div>
<div class="r" style="left:394px;top:721px;width:15px;height:15px;background:#dfebf4"></div>
<div class="r" style="left:409px;top:721px;width:15px;height:15px;background:#e3eef5"></div>
<div class="r" style="left:424px;top:721px;width:15px;height:15px;background:#e0ebf4"></div>
<div class="r" style="left:439px;top:721px;width:15px;height:15px;background:#e2edf5"></div>
<div class="r" style="left:454px;top:721px;width:15px;height:15px;background:#d8e7f1"></div>
<div class="r" style="left:469px;top:721px;width:7px;height:15px;background:#d8e7f1"></div>
<div class="r" style="left:394px;top:736px;width:15px;height:15px;background:#fafbfc"></div>
<div class="r" style="left:409px;top:736px;width:15px;height:15px;background:#fafbfc"></div>
<div class="r" style="left:424px;top:736px;width:15px;height:15px;background:#fafbfc"></div>
<div class="r" style="left:439px;top:736px;width:15px;height:15px;background:#fafbfc"></div>
<div class="r" style="left:454px;top:736px;width:15px;height:15px;background:#fafbfc"></div>
<div class="r" style="left:469px;top:736px;width:7px;height:15px;background:#fafbfc"></div>
<div class="r" style="left:394px;top:751px;width:15px;height:15px;background:#c8ddeb"></div>
<div class="r" style="left:409px;top:751px;width:15px;height:15px;background:#cfe1ee"></div>
<div class="r" style="left:424px;top:751px;width:15px;height:15px;background:#bfd7e8"></div>
<div class="r" style="left:439px;top:751px;width:15px;height:15px;background:#cee0ed"></div>
<div class="r" style="left:454px;top:751px;width:15px;height:15px;background:#cde0ed"></div>
<div class="r" style="left:469px;top:751px;width:7px;height:15px;background:#d5e5f0"></div>
<div class="r" style="left:394px;top:766px;width:15px;height:15px;background:#f6f9fc"></div>
<div class="r" style="left:409px;top:766px;width:15px;height:15px;background:#f8fbfd"></div>
<div class="r" style="left:424px;top:766px;width:15px;height:15px;background:#fafcfd"></div>
<div class="r" style="left:439px;top:766px;width:15px;height:15px;background:#f9fbfd"></div>
<div class="r" style="left:454px;top:766px;width:15px;height:15px;background:#f9fbfd"></div>
<div class="r" style="left:469px;top:766px;width:7px;height:15px;background:#f7fafc"></div>
<div class="r" style="left:394px;top:781px;width:15px;height:15px;background:#fafbfc"></div>
<div class="r" style="left:409px;top:781px;width:15px;height:15px;background:#fafbfc"></div>
<div class="r" style="left:424px;top:781px;width:15px;height:15px;background:#fafbfc"></div>
<div class="r" style="left:439px;top:781px;width:15px;height:15px;background:#fafbfc"></div>
<div class="r" style="left:454px;top:781px;width:15px;height:15px;background:#fafbfc"></div>
<div class="r" style="left:469px;top:781px;width:7px;height:15px;background:#fafbfc"></div>
<div class="r" style="left:394px;top:796px;width:15px;height:15px;background:#c1d8e9"></div>
<div class="r" style="left:409px;top:796px;width:15px;height:15px;background:#b7d2e5"></div>
<div class="r" style="left:424px;top:796px;width:15px;height:15px;background:#b8d3e6"></div>
<div class="r" style="left:439px;top:796px;width:15px;height:15px;background:#b2cfe3"></div>
<div class="r" style="left:454px;top:796px;width:15px;height:15px;background:#b4d0e4"></div>
<div class="r" style="left:469px;top:796px;width:7px;height:15px;background:#b3cfe4"></div>
<div class="r" style="left:394px;top:811px;width:15px;height:15px;background:#fafbfc"></div>
<div class="r" style="left:409px;top:811px;width:15px;height:15px;background:#fafbfc"></div>
<div class="r" style="left:424px;top:811px;width:15px;height:15px;background:#fafbfc"></div>
<div class="r" style="left:439px;top:811px;width:15px;height:15px;background:#fafbfc"></div>
<div class="r" style="left:454px;top:811px;width:15px;height:15px;background:#fafbfc"></div>
<div class="r" style="left:469px;top:811px;width:7px;height:15px;background:#fafbfc"></div>
<div class="r" style="left:394px;top:826px;width:15px;height:15px;background:#f7fafc"></div>
<div class="r" style="left:409px;top:826px;width:15px;height:15px;background:#f2f7fa"></div>
<div class="r" style="left:424px;top:826px;width:15px;height:15px;background:#f4f8fb"></div>
<div class="r" style="left:439px;top:826px;width:15px;height:15px;background:#f9fbfd"></div>
<div class="r" style="left:454px;top:826px;width:15px;height:15px;background:#f3f7fb"></div>
<div class="r" style="left:469px;top:826px;width:7px;height:15px;background:#f4f8fb"></div>
<div class="r" style="left:394px;top:841px;width:15px;height:15px;background:#b6d1e5"></div>
<div class="r" style="left:409px;top:841px;width:15px;height:15px;background:#c8ddeb"></div>
<div class="r" style="left:424px;top:841px;width:15px;height:15px;background:#bed6e8"></div>
<div class="r" style="left:439px;top:841px;width:15px;height:15px;background:#bed7e8"></div>
<div class="r" style="left:454px;top:841px;width:15px;height:15px;background:#b5d1e5"></div>
<div class="r" style="left:469px;top:841px;width:7px;height:15px;background:#b6d2e5"></div>
<div class="r" style="left:394px;top:856px;width:15px;height:15px;background:#fafbfc"></div>
<div class="r" style="left:409px;top:856px;width:15px;height:15px;background:#fafbfc"></div>
<div class="r" style="left:424px;top:856px;width:15px;height:15px;background:#fafbfc"></div>
<div class="r" style="left:439px;top:856px;width:15px;height:15px;background:#fafbfc"></div>
<div class="r" style="left:454px;top:856px;width:15px;height:15px;background:#fafbfc"></div>
<div class="r" style="left:469px;top:856px;width:7px;height:15px;background:#fafbfc"></div>
<div class="r" style="left:394px;top:871px;width:15px;height:15px;background:#e7f0f6"></div>
<div class="r" style="left:409px;top:871px;width:15px;height:15px;background:#e9f1f7"></div>
<div class="r" style="left:424px;top:871px;width:15px;height:15px;background:#e6eff6"></div>
<div class="r" style="left:439px;top:871px;width:15px;height:15px;background:#e8f1f7"></div>
<div class="r" style="left:454px;top:871px;width:15px;height:15px;background:#e8f0f7"></div>
<div class="r" style="left:469px;top:871px;width:7px;height:15px;background:#ecf3f8"></div>
<div class="r" style="left:394px;top:886px;width:15px;height:15px;background:#d8e7f1"></div>
<div class="r" style="left:409px;top:886px;width:15px;height:15px;background:#d6e6f0"></div>
<div class="r" style="left:424px;top:886px;width:15px;height:15px;background:#d2e3ef"></div>
<div class="r" style="left:439px;top:886px;width:15px;height:15px;background:#d7e6f1"></div>
<div class="r" style="left:454px;top:886px;width:15px;height:15px;background:#c8ddeb"></div>
<div class="r" style="left:469px;top:886px;width:7px;height:15px;background:#cde0ed"></div>
<div class="r" style="left:394px;top:901px;width:15px;height:15px;background:#fafbfc"></div>
<div class="r" style="left:409px;top:901px;width:15px;height:15px;background:#fafbfc"></div>
<div class="r" style="left:424px;top:901px;width:15px;height:15px;background:#fafbfc"></div>
<div class="r" style="left:439px;top:901px;width:15px;height:15px;background:#fafbfc"></div>
<div class="r" style="left:454px;top:901px;width:15px;height:15px;background:#fafbfc"></div>
<div class="r" style="left:469px;top:901px;width:7px;height:15px;background:#fafbfc"></div>
<div class="r" style="left:394px;top:916px;width:15px;height:15px;background:#d7e6f1"></div>
<div class="r" style="left:409px;top:916px;width:15px;height:15px;background:#d7e6f1"></div>
<div class="r" style="left:424px;top:916px;width:15px;height:15px;background:#d6e6f1"></div>
<div class="r" style="left:439px;top:916px;width:15px;height:15px;background:#dae8f2"></div>
<div class="r" style="left:454px;top:916px;width:15px;height:15px;background:#e1edf4"></div>
<div class="r" style="left:469px;top:916px;width:7px;height:15px;background:#d5e5f0"></div>
<div class="r" style="left:394px;top:931px;width:15px;height:6px;background:#dbe9f2"></div>
<div class="r" style="left:409px;top:931px;width:15px;height:6px;background:#dfebf3"></div>
<div class="r" style="left:424px;top:931px;width:15px;height:6px;background:#deebf3"></div>
<div class="r" style="left:439px;top:931px;width:15px;height:6px;background:#ddeaf3"></div>
<div class="r" style="left:454px;top:931px;width:15px;height:6px;background:#e5eff6"></div>
<div class="r" style="left:469px;top:931px;width:7px;height:6px;background:#dce9f2"></div>
<div class="r" style="left:1903px;top:0px;width:17px;height:937px;background:#f1f1f1"></div>
<div class="r" style="left:1905px;top:17px;width:13px;height:611px;background:#c1c1c1"></div>
<svg class="r" style="left:1907px;top:6px" width="9" height="6"><path d="M0.5 5H8.5L4.5 0.8Z" fill="#a3a3a3"/></svg>
<svg class="r" style="left:1907px;top:926px" width="9" height="6"><path d="M0.5 0.5H8.5L4.5 4.7Z" fill="#505050"/></svg>
</body></html>
